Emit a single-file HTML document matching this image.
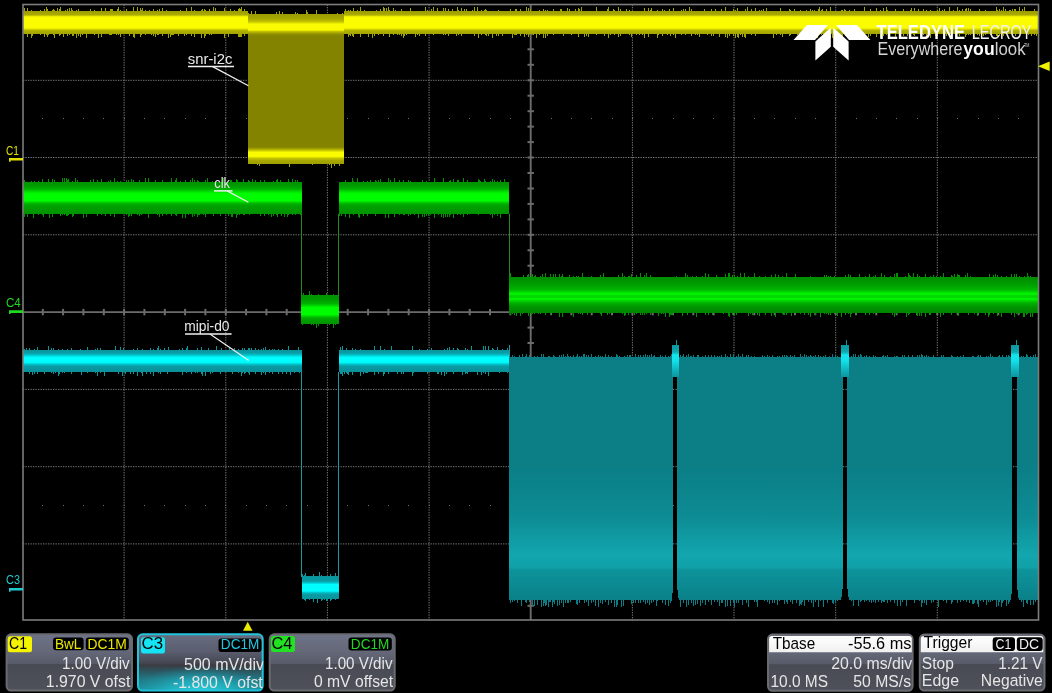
<!DOCTYPE html>
<html><head><meta charset="utf-8"><style>
*{margin:0;padding:0}
html,body{width:1052px;height:693px;background:#000;overflow:hidden;font-family:"Liberation Sans",sans-serif}
</style></head><body>
<svg width="1052" height="693" viewBox="0 0 1052 693" style="position:absolute;left:0;top:0;display:block;will-change:transform"><defs><linearGradient id="teal" x1="0" y1="356.8" x2="0" y2="599.5" gradientUnits="userSpaceOnUse"><stop offset="0" stop-color="#0b7e86"/><stop offset="0.45" stop-color="#0b7e86"/><stop offset="0.66" stop-color="#0d8c94"/><stop offset="0.815" stop-color="#12a6ae"/><stop offset="0.87" stop-color="#10a0a8"/><stop offset="0.875" stop-color="#0e949c"/><stop offset="1" stop-color="#0a8088"/></linearGradient><linearGradient id="pg" x1="0" y1="0" x2="0" y2="1"><stop offset="0" stop-color="#70748a"/><stop offset="0.08" stop-color="#6c7084"/><stop offset="0.3" stop-color="#646878"/><stop offset="0.52" stop-color="#585b69"/><stop offset="0.535" stop-color="#484a54"/><stop offset="1" stop-color="#4e505a"/></linearGradient><linearGradient id="pg3" x1="0" y1="0" x2="0" y2="1"><stop offset="0" stop-color="#686c80"/><stop offset="0.3" stop-color="#5a5e70"/><stop offset="0.5" stop-color="#464854"/><stop offset="0.55" stop-color="#3c3b42"/><stop offset="0.65" stop-color="#2c545e"/><stop offset="0.8" stop-color="#227884"/><stop offset="1" stop-color="#1e96a4"/></linearGradient><radialGradient id="glow" gradientUnits="userSpaceOnUse" cx="200" cy="694" r="70" gradientTransform="translate(200 694) scale(1 0.4) translate(-200 -694)"><stop offset="0" stop-color="#2ad8e8" stop-opacity="1"/><stop offset="0.5" stop-color="#22b8c8" stop-opacity="0.7"/><stop offset="1" stop-color="#1a98a8" stop-opacity="0"/></radialGradient><linearGradient id="hd" x1="0" y1="0" x2="0" y2="1"><stop offset="0" stop-color="#ffffff"/><stop offset="1" stop-color="#f0f0f0"/></linearGradient><linearGradient id="g0" gradientUnits="userSpaceOnUse" x1="0" y1="11.3" x2="0" y2="34.4"><stop offset="0.0000" stop-color="#9c9c00"/><stop offset="0.1602" stop-color="#acac00"/><stop offset="0.2165" stop-color="#e8e800"/><stop offset="0.2684" stop-color="#fcfc00"/><stop offset="0.7143" stop-color="#fcfc00"/><stop offset="0.7792" stop-color="#d8d800"/><stop offset="0.8312" stop-color="#b4b400"/><stop offset="1.0000" stop-color="#a0a000"/></linearGradient><linearGradient id="g1" gradientUnits="userSpaceOnUse" x1="0" y1="13.5" x2="0" y2="164.4"><stop offset="0.0000" stop-color="#9a9a00"/><stop offset="0.0364" stop-color="#a8a800"/><stop offset="0.0563" stop-color="#c8c800"/><stop offset="0.0696" stop-color="#fafa00"/><stop offset="0.1093" stop-color="#fafa00"/><stop offset="0.1193" stop-color="#c0c000"/><stop offset="0.1359" stop-color="#909000"/><stop offset="0.1491" stop-color="#838300"/><stop offset="0.8847" stop-color="#838300"/><stop offset="0.8979" stop-color="#a4a400"/><stop offset="0.9112" stop-color="#d8d800"/><stop offset="0.9211" stop-color="#fafa00"/><stop offset="0.9476" stop-color="#fafa00"/><stop offset="0.9576" stop-color="#c8c800"/><stop offset="0.9742" stop-color="#a8a800"/><stop offset="1.0000" stop-color="#9c9c00"/></linearGradient><linearGradient id="g2" gradientUnits="userSpaceOnUse" x1="0" y1="182.3" x2="0" y2="214.3"><stop offset="0.0000" stop-color="#009400"/><stop offset="0.1156" stop-color="#009c00"/><stop offset="0.2094" stop-color="#00b000"/><stop offset="0.2719" stop-color="#00d400"/><stop offset="0.3438" stop-color="#00f800"/><stop offset="0.3656" stop-color="#00fc00"/><stop offset="0.5781" stop-color="#00fc00"/><stop offset="0.6156" stop-color="#00d800"/><stop offset="0.6719" stop-color="#00b000"/><stop offset="0.7406" stop-color="#00a000"/><stop offset="1.0000" stop-color="#009200"/></linearGradient><linearGradient id="g3" gradientUnits="userSpaceOnUse" x1="0" y1="295.2" x2="0" y2="324.4"><stop offset="0.0000" stop-color="#009400"/><stop offset="0.1644" stop-color="#009c00"/><stop offset="0.2842" stop-color="#00b000"/><stop offset="0.3527" stop-color="#00d400"/><stop offset="0.4212" stop-color="#00fc00"/><stop offset="0.6610" stop-color="#00fc00"/><stop offset="0.7123" stop-color="#00d800"/><stop offset="0.7740" stop-color="#00b000"/><stop offset="0.8493" stop-color="#00a000"/><stop offset="1.0000" stop-color="#009200"/></linearGradient><linearGradient id="g4" gradientUnits="userSpaceOnUse" x1="0" y1="277.2" x2="0" y2="312.8"><stop offset="0.0000" stop-color="#008c00"/><stop offset="0.1910" stop-color="#009c00"/><stop offset="0.3455" stop-color="#00b400"/><stop offset="0.4242" stop-color="#00dc00"/><stop offset="0.4663" stop-color="#00fc00"/><stop offset="0.5084" stop-color="#00dc00"/><stop offset="0.5646" stop-color="#00d400"/><stop offset="0.6096" stop-color="#00fc00"/><stop offset="0.6517" stop-color="#00dc00"/><stop offset="0.7247" stop-color="#00b000"/><stop offset="0.8371" stop-color="#009400"/><stop offset="1.0000" stop-color="#008400"/></linearGradient><linearGradient id="g5" gradientUnits="userSpaceOnUse" x1="0" y1="349.5" x2="0" y2="372.2"><stop offset="0.0000" stop-color="#0a929a"/><stop offset="0.1542" stop-color="#0a9ea6"/><stop offset="0.2555" stop-color="#00cad2"/><stop offset="0.3436" stop-color="#00fcfc"/><stop offset="0.5639" stop-color="#00fcfc"/><stop offset="0.6520" stop-color="#00c4cc"/><stop offset="0.7401" stop-color="#0a9aa2"/><stop offset="0.8590" stop-color="#0a96a0"/><stop offset="1.0000" stop-color="#0a8e96"/></linearGradient><linearGradient id="g6" gradientUnits="userSpaceOnUse" x1="0" y1="576.4" x2="0" y2="598.8"><stop offset="0.0000" stop-color="#0a949c"/><stop offset="0.2054" stop-color="#0a9ca4"/><stop offset="0.2946" stop-color="#00c8d0"/><stop offset="0.3527" stop-color="#00fcfc"/><stop offset="0.6518" stop-color="#00fcfc"/><stop offset="0.7188" stop-color="#00c4cc"/><stop offset="0.7991" stop-color="#0a9ca4"/><stop offset="1.0000" stop-color="#0a949c"/></linearGradient><linearGradient id="g7" gradientUnits="userSpaceOnUse" x1="0" y1="344.7" x2="0" y2="377"><stop offset="0.0000" stop-color="#0c96a0"/><stop offset="0.2260" stop-color="#0ea8b0"/><stop offset="0.3189" stop-color="#12e6ee"/><stop offset="0.5046" stop-color="#12e0e8"/><stop offset="0.7523" stop-color="#10b8c0"/><stop offset="1.0000" stop-color="#0c96a0"/></linearGradient><linearGradient id="g8" gradientUnits="userSpaceOnUse" x1="0" y1="344.7" x2="0" y2="377"><stop offset="0.0000" stop-color="#0c96a0"/><stop offset="0.2260" stop-color="#0ea8b0"/><stop offset="0.3189" stop-color="#12e6ee"/><stop offset="0.5046" stop-color="#12e0e8"/><stop offset="0.7523" stop-color="#10b8c0"/><stop offset="1.0000" stop-color="#0c96a0"/></linearGradient><linearGradient id="g9" gradientUnits="userSpaceOnUse" x1="0" y1="344.7" x2="0" y2="377"><stop offset="0.0000" stop-color="#0c96a0"/><stop offset="0.2260" stop-color="#0ea8b0"/><stop offset="0.3189" stop-color="#12e6ee"/><stop offset="0.5046" stop-color="#12e0e8"/><stop offset="0.7523" stop-color="#10b8c0"/><stop offset="1.0000" stop-color="#0c96a0"/></linearGradient></defs><rect width="1052" height="693" fill="#000"/><g shape-rendering="crispEdges"><line x1="124.1" y1="4.5" x2="124.1" y2="620.0" stroke="#7c7c7c" stroke-width="1" stroke-dasharray="1.3 1.2" shape-rendering="auto"/><line x1="225.8" y1="4.5" x2="225.8" y2="620.0" stroke="#7c7c7c" stroke-width="1" stroke-dasharray="1.3 1.2" shape-rendering="auto"/><line x1="327.4" y1="4.5" x2="327.4" y2="620.0" stroke="#7c7c7c" stroke-width="1" stroke-dasharray="1.3 1.2" shape-rendering="auto"/><line x1="429.1" y1="4.5" x2="429.1" y2="620.0" stroke="#7c7c7c" stroke-width="1" stroke-dasharray="1.3 1.2" shape-rendering="auto"/><line x1="632.4" y1="4.5" x2="632.4" y2="620.0" stroke="#7c7c7c" stroke-width="1" stroke-dasharray="1.3 1.2" shape-rendering="auto"/><line x1="734.0" y1="4.5" x2="734.0" y2="620.0" stroke="#7c7c7c" stroke-width="1" stroke-dasharray="1.3 1.2" shape-rendering="auto"/><line x1="835.7" y1="4.5" x2="835.7" y2="620.0" stroke="#7c7c7c" stroke-width="1" stroke-dasharray="1.3 1.2" shape-rendering="auto"/><line x1="937.3" y1="4.5" x2="937.3" y2="620.0" stroke="#7c7c7c" stroke-width="1" stroke-dasharray="1.3 1.2" shape-rendering="auto"/><line x1="23.0" y1="80.3" x2="1038.5" y2="80.3" stroke="#7c7c7c" stroke-width="1" stroke-dasharray="1.3 1.2" shape-rendering="auto"/><line x1="23.0" y1="157.5" x2="1038.5" y2="157.5" stroke="#7c7c7c" stroke-width="1" stroke-dasharray="1.3 1.2" shape-rendering="auto"/><line x1="23.0" y1="234.8" x2="1038.5" y2="234.8" stroke="#7c7c7c" stroke-width="1" stroke-dasharray="1.3 1.2" shape-rendering="auto"/><line x1="23.0" y1="389.4" x2="1038.5" y2="389.4" stroke="#7c7c7c" stroke-width="1" stroke-dasharray="1.3 1.2" shape-rendering="auto"/><line x1="23.0" y1="466.7" x2="1038.5" y2="466.7" stroke="#7c7c7c" stroke-width="1" stroke-dasharray="1.3 1.2" shape-rendering="auto"/><line x1="23.0" y1="543.9" x2="1038.5" y2="543.9" stroke="#7c7c7c" stroke-width="1" stroke-dasharray="1.3 1.2" shape-rendering="auto"/><rect x="42.3" y="118.4" width="1" height="1" fill="#6c6c6c"/><rect x="62.6" y="118.4" width="1" height="1" fill="#6c6c6c"/><rect x="82.9" y="118.4" width="1" height="1" fill="#6c6c6c"/><rect x="103.3" y="118.4" width="1" height="1" fill="#6c6c6c"/><rect x="123.6" y="118.4" width="1" height="1" fill="#6c6c6c"/><rect x="143.9" y="118.4" width="1" height="1" fill="#6c6c6c"/><rect x="164.3" y="118.4" width="1" height="1" fill="#6c6c6c"/><rect x="184.6" y="118.4" width="1" height="1" fill="#6c6c6c"/><rect x="204.9" y="118.4" width="1" height="1" fill="#6c6c6c"/><rect x="225.3" y="118.4" width="1" height="1" fill="#6c6c6c"/><rect x="245.6" y="118.4" width="1" height="1" fill="#6c6c6c"/><rect x="265.9" y="118.4" width="1" height="1" fill="#6c6c6c"/><rect x="286.2" y="118.4" width="1" height="1" fill="#6c6c6c"/><rect x="306.6" y="118.4" width="1" height="1" fill="#6c6c6c"/><rect x="326.9" y="118.4" width="1" height="1" fill="#6c6c6c"/><rect x="347.2" y="118.4" width="1" height="1" fill="#6c6c6c"/><rect x="367.6" y="118.4" width="1" height="1" fill="#6c6c6c"/><rect x="387.9" y="118.4" width="1" height="1" fill="#6c6c6c"/><rect x="408.2" y="118.4" width="1" height="1" fill="#6c6c6c"/><rect x="428.6" y="118.4" width="1" height="1" fill="#6c6c6c"/><rect x="448.9" y="118.4" width="1" height="1" fill="#6c6c6c"/><rect x="469.2" y="118.4" width="1" height="1" fill="#6c6c6c"/><rect x="489.5" y="118.4" width="1" height="1" fill="#6c6c6c"/><rect x="509.9" y="118.4" width="1" height="1" fill="#6c6c6c"/><rect x="530.2" y="118.4" width="1" height="1" fill="#6c6c6c"/><rect x="550.5" y="118.4" width="1" height="1" fill="#6c6c6c"/><rect x="570.9" y="118.4" width="1" height="1" fill="#6c6c6c"/><rect x="591.2" y="118.4" width="1" height="1" fill="#6c6c6c"/><rect x="611.5" y="118.4" width="1" height="1" fill="#6c6c6c"/><rect x="631.9" y="118.4" width="1" height="1" fill="#6c6c6c"/><rect x="652.2" y="118.4" width="1" height="1" fill="#6c6c6c"/><rect x="672.5" y="118.4" width="1" height="1" fill="#6c6c6c"/><rect x="692.8" y="118.4" width="1" height="1" fill="#6c6c6c"/><rect x="713.2" y="118.4" width="1" height="1" fill="#6c6c6c"/><rect x="733.5" y="118.4" width="1" height="1" fill="#6c6c6c"/><rect x="753.8" y="118.4" width="1" height="1" fill="#6c6c6c"/><rect x="774.2" y="118.4" width="1" height="1" fill="#6c6c6c"/><rect x="794.5" y="118.4" width="1" height="1" fill="#6c6c6c"/><rect x="814.8" y="118.4" width="1" height="1" fill="#6c6c6c"/><rect x="835.2" y="118.4" width="1" height="1" fill="#6c6c6c"/><rect x="855.5" y="118.4" width="1" height="1" fill="#6c6c6c"/><rect x="875.8" y="118.4" width="1" height="1" fill="#6c6c6c"/><rect x="896.1" y="118.4" width="1" height="1" fill="#6c6c6c"/><rect x="916.5" y="118.4" width="1" height="1" fill="#6c6c6c"/><rect x="936.8" y="118.4" width="1" height="1" fill="#6c6c6c"/><rect x="957.1" y="118.4" width="1" height="1" fill="#6c6c6c"/><rect x="977.5" y="118.4" width="1" height="1" fill="#6c6c6c"/><rect x="997.8" y="118.4" width="1" height="1" fill="#6c6c6c"/><rect x="1018.1" y="118.4" width="1" height="1" fill="#6c6c6c"/><rect x="42.3" y="504.8" width="1" height="1" fill="#6c6c6c"/><rect x="62.6" y="504.8" width="1" height="1" fill="#6c6c6c"/><rect x="82.9" y="504.8" width="1" height="1" fill="#6c6c6c"/><rect x="103.3" y="504.8" width="1" height="1" fill="#6c6c6c"/><rect x="123.6" y="504.8" width="1" height="1" fill="#6c6c6c"/><rect x="143.9" y="504.8" width="1" height="1" fill="#6c6c6c"/><rect x="164.3" y="504.8" width="1" height="1" fill="#6c6c6c"/><rect x="184.6" y="504.8" width="1" height="1" fill="#6c6c6c"/><rect x="204.9" y="504.8" width="1" height="1" fill="#6c6c6c"/><rect x="225.3" y="504.8" width="1" height="1" fill="#6c6c6c"/><rect x="245.6" y="504.8" width="1" height="1" fill="#6c6c6c"/><rect x="265.9" y="504.8" width="1" height="1" fill="#6c6c6c"/><rect x="286.2" y="504.8" width="1" height="1" fill="#6c6c6c"/><rect x="306.6" y="504.8" width="1" height="1" fill="#6c6c6c"/><rect x="326.9" y="504.8" width="1" height="1" fill="#6c6c6c"/><rect x="347.2" y="504.8" width="1" height="1" fill="#6c6c6c"/><rect x="367.6" y="504.8" width="1" height="1" fill="#6c6c6c"/><rect x="387.9" y="504.8" width="1" height="1" fill="#6c6c6c"/><rect x="408.2" y="504.8" width="1" height="1" fill="#6c6c6c"/><rect x="428.6" y="504.8" width="1" height="1" fill="#6c6c6c"/><rect x="448.9" y="504.8" width="1" height="1" fill="#6c6c6c"/><rect x="469.2" y="504.8" width="1" height="1" fill="#6c6c6c"/><rect x="489.5" y="504.8" width="1" height="1" fill="#6c6c6c"/><rect x="509.9" y="504.8" width="1" height="1" fill="#6c6c6c"/><rect x="530.2" y="504.8" width="1" height="1" fill="#6c6c6c"/><rect x="550.5" y="504.8" width="1" height="1" fill="#6c6c6c"/><rect x="570.9" y="504.8" width="1" height="1" fill="#6c6c6c"/><rect x="591.2" y="504.8" width="1" height="1" fill="#6c6c6c"/><rect x="611.5" y="504.8" width="1" height="1" fill="#6c6c6c"/><rect x="631.9" y="504.8" width="1" height="1" fill="#6c6c6c"/><rect x="652.2" y="504.8" width="1" height="1" fill="#6c6c6c"/><rect x="672.5" y="504.8" width="1" height="1" fill="#6c6c6c"/><rect x="692.8" y="504.8" width="1" height="1" fill="#6c6c6c"/><rect x="713.2" y="504.8" width="1" height="1" fill="#6c6c6c"/><rect x="733.5" y="504.8" width="1" height="1" fill="#6c6c6c"/><rect x="753.8" y="504.8" width="1" height="1" fill="#6c6c6c"/><rect x="774.2" y="504.8" width="1" height="1" fill="#6c6c6c"/><rect x="794.5" y="504.8" width="1" height="1" fill="#6c6c6c"/><rect x="814.8" y="504.8" width="1" height="1" fill="#6c6c6c"/><rect x="835.2" y="504.8" width="1" height="1" fill="#6c6c6c"/><rect x="855.5" y="504.8" width="1" height="1" fill="#6c6c6c"/><rect x="875.8" y="504.8" width="1" height="1" fill="#6c6c6c"/><rect x="896.1" y="504.8" width="1" height="1" fill="#6c6c6c"/><rect x="916.5" y="504.8" width="1" height="1" fill="#6c6c6c"/><rect x="936.8" y="504.8" width="1" height="1" fill="#6c6c6c"/><rect x="957.1" y="504.8" width="1" height="1" fill="#6c6c6c"/><rect x="977.5" y="504.8" width="1" height="1" fill="#6c6c6c"/><rect x="997.8" y="504.8" width="1" height="1" fill="#6c6c6c"/><rect x="1018.1" y="504.8" width="1" height="1" fill="#6c6c6c"/><line x1="23.0" y1="312.10" x2="1038.5" y2="312.10" stroke="#6c6c6c" stroke-width="1.9" shape-rendering="auto"/><line x1="530.70" y1="4.5" x2="530.70" y2="620.0" stroke="#6c6c6c" stroke-width="1.9" shape-rendering="auto"/><line x1="42.8" y1="308.9" x2="42.8" y2="315.3" stroke="#6c6c6c" stroke-width="2" shape-rendering="auto"/><line x1="63.1" y1="308.9" x2="63.1" y2="315.3" stroke="#6c6c6c" stroke-width="2" shape-rendering="auto"/><line x1="83.4" y1="308.9" x2="83.4" y2="315.3" stroke="#6c6c6c" stroke-width="2" shape-rendering="auto"/><line x1="103.8" y1="308.9" x2="103.8" y2="315.3" stroke="#6c6c6c" stroke-width="2" shape-rendering="auto"/><line x1="124.1" y1="308.9" x2="124.1" y2="315.3" stroke="#6c6c6c" stroke-width="2" shape-rendering="auto"/><line x1="144.4" y1="308.9" x2="144.4" y2="315.3" stroke="#6c6c6c" stroke-width="2" shape-rendering="auto"/><line x1="164.8" y1="308.9" x2="164.8" y2="315.3" stroke="#6c6c6c" stroke-width="2" shape-rendering="auto"/><line x1="185.1" y1="308.9" x2="185.1" y2="315.3" stroke="#6c6c6c" stroke-width="2" shape-rendering="auto"/><line x1="205.4" y1="308.9" x2="205.4" y2="315.3" stroke="#6c6c6c" stroke-width="2" shape-rendering="auto"/><line x1="225.8" y1="308.9" x2="225.8" y2="315.3" stroke="#6c6c6c" stroke-width="2" shape-rendering="auto"/><line x1="246.1" y1="308.9" x2="246.1" y2="315.3" stroke="#6c6c6c" stroke-width="2" shape-rendering="auto"/><line x1="266.4" y1="308.9" x2="266.4" y2="315.3" stroke="#6c6c6c" stroke-width="2" shape-rendering="auto"/><line x1="286.7" y1="308.9" x2="286.7" y2="315.3" stroke="#6c6c6c" stroke-width="2" shape-rendering="auto"/><line x1="307.1" y1="308.9" x2="307.1" y2="315.3" stroke="#6c6c6c" stroke-width="2" shape-rendering="auto"/><line x1="327.4" y1="308.9" x2="327.4" y2="315.3" stroke="#6c6c6c" stroke-width="2" shape-rendering="auto"/><line x1="347.7" y1="308.9" x2="347.7" y2="315.3" stroke="#6c6c6c" stroke-width="2" shape-rendering="auto"/><line x1="368.1" y1="308.9" x2="368.1" y2="315.3" stroke="#6c6c6c" stroke-width="2" shape-rendering="auto"/><line x1="388.4" y1="308.9" x2="388.4" y2="315.3" stroke="#6c6c6c" stroke-width="2" shape-rendering="auto"/><line x1="408.7" y1="308.9" x2="408.7" y2="315.3" stroke="#6c6c6c" stroke-width="2" shape-rendering="auto"/><line x1="429.1" y1="308.9" x2="429.1" y2="315.3" stroke="#6c6c6c" stroke-width="2" shape-rendering="auto"/><line x1="449.4" y1="308.9" x2="449.4" y2="315.3" stroke="#6c6c6c" stroke-width="2" shape-rendering="auto"/><line x1="469.7" y1="308.9" x2="469.7" y2="315.3" stroke="#6c6c6c" stroke-width="2" shape-rendering="auto"/><line x1="490.0" y1="308.9" x2="490.0" y2="315.3" stroke="#6c6c6c" stroke-width="2" shape-rendering="auto"/><line x1="510.4" y1="308.9" x2="510.4" y2="315.3" stroke="#6c6c6c" stroke-width="2" shape-rendering="auto"/><line x1="551.0" y1="308.9" x2="551.0" y2="315.3" stroke="#6c6c6c" stroke-width="2" shape-rendering="auto"/><line x1="571.4" y1="308.9" x2="571.4" y2="315.3" stroke="#6c6c6c" stroke-width="2" shape-rendering="auto"/><line x1="591.7" y1="308.9" x2="591.7" y2="315.3" stroke="#6c6c6c" stroke-width="2" shape-rendering="auto"/><line x1="612.0" y1="308.9" x2="612.0" y2="315.3" stroke="#6c6c6c" stroke-width="2" shape-rendering="auto"/><line x1="632.4" y1="308.9" x2="632.4" y2="315.3" stroke="#6c6c6c" stroke-width="2" shape-rendering="auto"/><line x1="652.7" y1="308.9" x2="652.7" y2="315.3" stroke="#6c6c6c" stroke-width="2" shape-rendering="auto"/><line x1="673.0" y1="308.9" x2="673.0" y2="315.3" stroke="#6c6c6c" stroke-width="2" shape-rendering="auto"/><line x1="693.3" y1="308.9" x2="693.3" y2="315.3" stroke="#6c6c6c" stroke-width="2" shape-rendering="auto"/><line x1="713.7" y1="308.9" x2="713.7" y2="315.3" stroke="#6c6c6c" stroke-width="2" shape-rendering="auto"/><line x1="734.0" y1="308.9" x2="734.0" y2="315.3" stroke="#6c6c6c" stroke-width="2" shape-rendering="auto"/><line x1="754.3" y1="308.9" x2="754.3" y2="315.3" stroke="#6c6c6c" stroke-width="2" shape-rendering="auto"/><line x1="774.7" y1="308.9" x2="774.7" y2="315.3" stroke="#6c6c6c" stroke-width="2" shape-rendering="auto"/><line x1="795.0" y1="308.9" x2="795.0" y2="315.3" stroke="#6c6c6c" stroke-width="2" shape-rendering="auto"/><line x1="815.3" y1="308.9" x2="815.3" y2="315.3" stroke="#6c6c6c" stroke-width="2" shape-rendering="auto"/><line x1="835.7" y1="308.9" x2="835.7" y2="315.3" stroke="#6c6c6c" stroke-width="2" shape-rendering="auto"/><line x1="856.0" y1="308.9" x2="856.0" y2="315.3" stroke="#6c6c6c" stroke-width="2" shape-rendering="auto"/><line x1="876.3" y1="308.9" x2="876.3" y2="315.3" stroke="#6c6c6c" stroke-width="2" shape-rendering="auto"/><line x1="896.6" y1="308.9" x2="896.6" y2="315.3" stroke="#6c6c6c" stroke-width="2" shape-rendering="auto"/><line x1="917.0" y1="308.9" x2="917.0" y2="315.3" stroke="#6c6c6c" stroke-width="2" shape-rendering="auto"/><line x1="937.3" y1="308.9" x2="937.3" y2="315.3" stroke="#6c6c6c" stroke-width="2" shape-rendering="auto"/><line x1="957.6" y1="308.9" x2="957.6" y2="315.3" stroke="#6c6c6c" stroke-width="2" shape-rendering="auto"/><line x1="978.0" y1="308.9" x2="978.0" y2="315.3" stroke="#6c6c6c" stroke-width="2" shape-rendering="auto"/><line x1="998.3" y1="308.9" x2="998.3" y2="315.3" stroke="#6c6c6c" stroke-width="2" shape-rendering="auto"/><line x1="1018.6" y1="308.9" x2="1018.6" y2="315.3" stroke="#6c6c6c" stroke-width="2" shape-rendering="auto"/><line x1="527.5" y1="18.4" x2="533.9" y2="18.4" stroke="#6c6c6c" stroke-width="2" shape-rendering="auto"/><line x1="527.5" y1="33.9" x2="533.9" y2="33.9" stroke="#6c6c6c" stroke-width="2" shape-rendering="auto"/><line x1="527.5" y1="49.3" x2="533.9" y2="49.3" stroke="#6c6c6c" stroke-width="2" shape-rendering="auto"/><line x1="527.5" y1="64.8" x2="533.9" y2="64.8" stroke="#6c6c6c" stroke-width="2" shape-rendering="auto"/><line x1="527.5" y1="80.3" x2="533.9" y2="80.3" stroke="#6c6c6c" stroke-width="2" shape-rendering="auto"/><line x1="527.5" y1="95.7" x2="533.9" y2="95.7" stroke="#6c6c6c" stroke-width="2" shape-rendering="auto"/><line x1="527.5" y1="111.2" x2="533.9" y2="111.2" stroke="#6c6c6c" stroke-width="2" shape-rendering="auto"/><line x1="527.5" y1="126.6" x2="533.9" y2="126.6" stroke="#6c6c6c" stroke-width="2" shape-rendering="auto"/><line x1="527.5" y1="142.1" x2="533.9" y2="142.1" stroke="#6c6c6c" stroke-width="2" shape-rendering="auto"/><line x1="527.5" y1="157.5" x2="533.9" y2="157.5" stroke="#6c6c6c" stroke-width="2" shape-rendering="auto"/><line x1="527.5" y1="173.0" x2="533.9" y2="173.0" stroke="#6c6c6c" stroke-width="2" shape-rendering="auto"/><line x1="527.5" y1="188.5" x2="533.9" y2="188.5" stroke="#6c6c6c" stroke-width="2" shape-rendering="auto"/><line x1="527.5" y1="203.9" x2="533.9" y2="203.9" stroke="#6c6c6c" stroke-width="2" shape-rendering="auto"/><line x1="527.5" y1="219.4" x2="533.9" y2="219.4" stroke="#6c6c6c" stroke-width="2" shape-rendering="auto"/><line x1="527.5" y1="234.8" x2="533.9" y2="234.8" stroke="#6c6c6c" stroke-width="2" shape-rendering="auto"/><line x1="527.5" y1="250.3" x2="533.9" y2="250.3" stroke="#6c6c6c" stroke-width="2" shape-rendering="auto"/><line x1="527.5" y1="265.7" x2="533.9" y2="265.7" stroke="#6c6c6c" stroke-width="2" shape-rendering="auto"/><line x1="527.5" y1="281.2" x2="533.9" y2="281.2" stroke="#6c6c6c" stroke-width="2" shape-rendering="auto"/><line x1="527.5" y1="296.6" x2="533.9" y2="296.6" stroke="#6c6c6c" stroke-width="2" shape-rendering="auto"/><line x1="527.5" y1="327.6" x2="533.9" y2="327.6" stroke="#6c6c6c" stroke-width="2" shape-rendering="auto"/><line x1="527.5" y1="343.0" x2="533.9" y2="343.0" stroke="#6c6c6c" stroke-width="2" shape-rendering="auto"/><line x1="527.5" y1="358.5" x2="533.9" y2="358.5" stroke="#6c6c6c" stroke-width="2" shape-rendering="auto"/><line x1="527.5" y1="373.9" x2="533.9" y2="373.9" stroke="#6c6c6c" stroke-width="2" shape-rendering="auto"/><line x1="527.5" y1="389.4" x2="533.9" y2="389.4" stroke="#6c6c6c" stroke-width="2" shape-rendering="auto"/><line x1="527.5" y1="404.8" x2="533.9" y2="404.8" stroke="#6c6c6c" stroke-width="2" shape-rendering="auto"/><line x1="527.5" y1="420.3" x2="533.9" y2="420.3" stroke="#6c6c6c" stroke-width="2" shape-rendering="auto"/><line x1="527.5" y1="435.7" x2="533.9" y2="435.7" stroke="#6c6c6c" stroke-width="2" shape-rendering="auto"/><line x1="527.5" y1="451.2" x2="533.9" y2="451.2" stroke="#6c6c6c" stroke-width="2" shape-rendering="auto"/><line x1="527.5" y1="466.7" x2="533.9" y2="466.7" stroke="#6c6c6c" stroke-width="2" shape-rendering="auto"/><line x1="527.5" y1="482.1" x2="533.9" y2="482.1" stroke="#6c6c6c" stroke-width="2" shape-rendering="auto"/><line x1="527.5" y1="497.6" x2="533.9" y2="497.6" stroke="#6c6c6c" stroke-width="2" shape-rendering="auto"/><line x1="527.5" y1="513.0" x2="533.9" y2="513.0" stroke="#6c6c6c" stroke-width="2" shape-rendering="auto"/><line x1="527.5" y1="528.5" x2="533.9" y2="528.5" stroke="#6c6c6c" stroke-width="2" shape-rendering="auto"/><line x1="527.5" y1="543.9" x2="533.9" y2="543.9" stroke="#6c6c6c" stroke-width="2" shape-rendering="auto"/><line x1="527.5" y1="559.4" x2="533.9" y2="559.4" stroke="#6c6c6c" stroke-width="2" shape-rendering="auto"/><line x1="527.5" y1="574.9" x2="533.9" y2="574.9" stroke="#6c6c6c" stroke-width="2" shape-rendering="auto"/><line x1="527.5" y1="590.3" x2="533.9" y2="590.3" stroke="#6c6c6c" stroke-width="2" shape-rendering="auto"/><line x1="527.5" y1="605.8" x2="533.9" y2="605.8" stroke="#6c6c6c" stroke-width="2" shape-rendering="auto"/><rect x="23.0" y="11.3" width="224.5" height="23.1" fill="url(#g0)"/><rect x="344.4" y="11.3" width="694.1" height="23.1" fill="url(#g0)"/><rect x="24" y="8.3" width="1" height="3" fill="#a4a400"/><rect x="27" y="8.3" width="1" height="3" fill="#a4a400"/><rect x="27" y="34.4" width="1" height="3" fill="#a4a400"/><rect x="31" y="10.3" width="1" height="1" fill="#a4a400"/><rect x="31" y="34.4" width="1" height="4" fill="#a4a400"/><rect x="32" y="34.4" width="1" height="2" fill="#a4a400"/><rect x="40" y="10.3" width="1" height="1" fill="#a4a400"/><rect x="40" y="34.4" width="1" height="1" fill="#a4a400"/><rect x="44" y="9.3" width="1" height="2" fill="#a4a400"/><rect x="44" y="34.4" width="1" height="3" fill="#a4a400"/><rect x="46" y="7.3" width="1" height="4" fill="#a4a400"/><rect x="46" y="34.4" width="1" height="1" fill="#a4a400"/><rect x="47" y="9.3" width="1" height="2" fill="#a4a400"/><rect x="47" y="34.4" width="1" height="3" fill="#a4a400"/><rect x="48" y="34.4" width="1" height="1" fill="#a4a400"/><rect x="52" y="10.3" width="1" height="1" fill="#a4a400"/><rect x="53" y="9.3" width="1" height="2" fill="#a4a400"/><rect x="53" y="34.4" width="1" height="1" fill="#a4a400"/><rect x="54" y="10.3" width="1" height="1" fill="#a4a400"/><rect x="54" y="34.4" width="1" height="4" fill="#a4a400"/><rect x="57" y="8.3" width="1" height="3" fill="#a4a400"/><rect x="59" y="9.3" width="1" height="2" fill="#a4a400"/><rect x="59" y="34.4" width="1" height="2" fill="#a4a400"/><rect x="60" y="7.3" width="1" height="4" fill="#a4a400"/><rect x="60" y="34.4" width="1" height="1" fill="#a4a400"/><rect x="63" y="34.4" width="1" height="3" fill="#a4a400"/><rect x="65" y="10.3" width="1" height="1" fill="#a4a400"/><rect x="67" y="9.3" width="1" height="2" fill="#a4a400"/><rect x="67" y="34.4" width="1" height="2" fill="#a4a400"/><rect x="69" y="8.3" width="1" height="3" fill="#a4a400"/><rect x="69" y="34.4" width="1" height="1" fill="#a4a400"/><rect x="71" y="8.3" width="1" height="3" fill="#a4a400"/><rect x="72" y="10.3" width="1" height="1" fill="#a4a400"/><rect x="72" y="34.4" width="1" height="2" fill="#a4a400"/><rect x="73" y="34.4" width="1" height="2" fill="#a4a400"/><rect x="76" y="10.3" width="1" height="1" fill="#a4a400"/><rect x="76" y="34.4" width="1" height="4" fill="#a4a400"/><rect x="78" y="9.3" width="1" height="2" fill="#a4a400"/><rect x="78" y="34.4" width="1" height="2" fill="#a4a400"/><rect x="80" y="34.4" width="1" height="3" fill="#a4a400"/><rect x="82" y="34.4" width="1" height="1" fill="#a4a400"/><rect x="86" y="34.4" width="1" height="4" fill="#a4a400"/><rect x="90" y="9.3" width="1" height="2" fill="#a4a400"/><rect x="94" y="10.3" width="1" height="1" fill="#a4a400"/><rect x="94" y="34.4" width="1" height="1" fill="#a4a400"/><rect x="98" y="34.4" width="1" height="4" fill="#a4a400"/><rect x="101" y="8.3" width="1" height="3" fill="#a4a400"/><rect x="101" y="34.4" width="1" height="3" fill="#a4a400"/><rect x="105" y="8.3" width="1" height="3" fill="#a4a400"/><rect x="109" y="34.4" width="1" height="1" fill="#a4a400"/><rect x="110" y="9.3" width="1" height="2" fill="#a4a400"/><rect x="110" y="34.4" width="1" height="1" fill="#a4a400"/><rect x="111" y="9.3" width="1" height="2" fill="#a4a400"/><rect x="111" y="34.4" width="1" height="1" fill="#a4a400"/><rect x="112" y="9.3" width="1" height="2" fill="#a4a400"/><rect x="116" y="34.4" width="1" height="1" fill="#a4a400"/><rect x="117" y="9.3" width="1" height="2" fill="#a4a400"/><rect x="118" y="7.3" width="1" height="4" fill="#a4a400"/><rect x="118" y="34.4" width="1" height="1" fill="#a4a400"/><rect x="120" y="10.3" width="1" height="1" fill="#a4a400"/><rect x="120" y="34.4" width="1" height="3" fill="#a4a400"/><rect x="126" y="9.3" width="1" height="2" fill="#a4a400"/><rect x="129" y="34.4" width="1" height="2" fill="#a4a400"/><rect x="133" y="7.3" width="1" height="4" fill="#a4a400"/><rect x="133" y="34.4" width="1" height="3" fill="#a4a400"/><rect x="134" y="34.4" width="1" height="4" fill="#a4a400"/><rect x="137" y="7.3" width="1" height="4" fill="#a4a400"/><rect x="140" y="8.3" width="1" height="3" fill="#a4a400"/><rect x="140" y="34.4" width="1" height="3" fill="#a4a400"/><rect x="141" y="10.3" width="1" height="1" fill="#a4a400"/><rect x="141" y="34.4" width="1" height="1" fill="#a4a400"/><rect x="142" y="8.3" width="1" height="3" fill="#a4a400"/><rect x="145" y="10.3" width="1" height="1" fill="#a4a400"/><rect x="145" y="34.4" width="1" height="1" fill="#a4a400"/><rect x="149" y="10.3" width="1" height="1" fill="#a4a400"/><rect x="151" y="34.4" width="1" height="1" fill="#a4a400"/><rect x="153" y="9.3" width="1" height="2" fill="#a4a400"/><rect x="153" y="34.4" width="1" height="2" fill="#a4a400"/><rect x="155" y="34.4" width="1" height="3" fill="#a4a400"/><rect x="157" y="10.3" width="1" height="1" fill="#a4a400"/><rect x="157" y="34.4" width="1" height="1" fill="#a4a400"/><rect x="158" y="34.4" width="1" height="1" fill="#a4a400"/><rect x="159" y="9.3" width="1" height="2" fill="#a4a400"/><rect x="162" y="8.3" width="1" height="3" fill="#a4a400"/><rect x="162" y="34.4" width="1" height="2" fill="#a4a400"/><rect x="166" y="10.3" width="1" height="1" fill="#a4a400"/><rect x="168" y="34.4" width="1" height="4" fill="#a4a400"/><rect x="170" y="34.4" width="1" height="3" fill="#a4a400"/><rect x="171" y="34.4" width="1" height="1" fill="#a4a400"/><rect x="172" y="34.4" width="1" height="1" fill="#a4a400"/><rect x="173" y="34.4" width="1" height="1" fill="#a4a400"/><rect x="178" y="34.4" width="1" height="2" fill="#a4a400"/><rect x="180" y="10.3" width="1" height="1" fill="#a4a400"/><rect x="184" y="34.4" width="1" height="2" fill="#a4a400"/><rect x="186" y="8.3" width="1" height="3" fill="#a4a400"/><rect x="186" y="34.4" width="1" height="1" fill="#a4a400"/><rect x="191" y="7.3" width="1" height="4" fill="#a4a400"/><rect x="191" y="34.4" width="1" height="2" fill="#a4a400"/><rect x="194" y="10.3" width="1" height="1" fill="#a4a400"/><rect x="194" y="34.4" width="1" height="3" fill="#a4a400"/><rect x="201" y="10.3" width="1" height="1" fill="#a4a400"/><rect x="201" y="34.4" width="1" height="4" fill="#a4a400"/><rect x="202" y="9.3" width="1" height="2" fill="#a4a400"/><rect x="204" y="9.3" width="1" height="2" fill="#a4a400"/><rect x="204" y="34.4" width="1" height="4" fill="#a4a400"/><rect x="205" y="10.3" width="1" height="1" fill="#a4a400"/><rect x="205" y="34.4" width="1" height="2" fill="#a4a400"/><rect x="209" y="9.3" width="1" height="2" fill="#a4a400"/><rect x="209" y="34.4" width="1" height="1" fill="#a4a400"/><rect x="211" y="34.4" width="1" height="1" fill="#a4a400"/><rect x="213" y="7.3" width="1" height="4" fill="#a4a400"/><rect x="215" y="8.3" width="1" height="3" fill="#a4a400"/><rect x="224" y="8.3" width="1" height="3" fill="#a4a400"/><rect x="224" y="34.4" width="1" height="4" fill="#a4a400"/><rect x="228" y="34.4" width="1" height="3" fill="#a4a400"/><rect x="230" y="9.3" width="1" height="2" fill="#a4a400"/><rect x="234" y="10.3" width="1" height="1" fill="#a4a400"/><rect x="238" y="9.3" width="1" height="2" fill="#a4a400"/><rect x="238" y="34.4" width="1" height="3" fill="#a4a400"/><rect x="239" y="8.3" width="1" height="3" fill="#a4a400"/><rect x="239" y="34.4" width="1" height="3" fill="#a4a400"/><rect x="240" y="9.3" width="1" height="2" fill="#a4a400"/><rect x="240" y="34.4" width="1" height="3" fill="#a4a400"/><rect x="241" y="7.3" width="1" height="4" fill="#a4a400"/><rect x="241" y="34.4" width="1" height="3" fill="#a4a400"/><rect x="244" y="9.3" width="1" height="2" fill="#a4a400"/><rect x="244" y="34.4" width="1" height="2" fill="#a4a400"/><rect x="345" y="9.3" width="1" height="2" fill="#a4a400"/><rect x="348" y="10.3" width="1" height="1" fill="#a4a400"/><rect x="348" y="34.4" width="1" height="3" fill="#a4a400"/><rect x="349" y="34.4" width="1" height="1" fill="#a4a400"/><rect x="350" y="10.3" width="1" height="1" fill="#a4a400"/><rect x="350" y="34.4" width="1" height="2" fill="#a4a400"/><rect x="352" y="34.4" width="1" height="2" fill="#a4a400"/><rect x="353" y="8.3" width="1" height="3" fill="#a4a400"/><rect x="353" y="34.4" width="1" height="3" fill="#a4a400"/><rect x="357" y="10.3" width="1" height="1" fill="#a4a400"/><rect x="360" y="7.3" width="1" height="4" fill="#a4a400"/><rect x="360" y="34.4" width="1" height="3" fill="#a4a400"/><rect x="364" y="10.3" width="1" height="1" fill="#a4a400"/><rect x="368" y="34.4" width="1" height="3" fill="#a4a400"/><rect x="372" y="34.4" width="1" height="4" fill="#a4a400"/><rect x="374" y="34.4" width="1" height="2" fill="#a4a400"/><rect x="376" y="10.3" width="1" height="1" fill="#a4a400"/><rect x="378" y="34.4" width="1" height="1" fill="#a4a400"/><rect x="380" y="9.3" width="1" height="2" fill="#a4a400"/><rect x="383" y="7.3" width="1" height="4" fill="#a4a400"/><rect x="383" y="34.4" width="1" height="2" fill="#a4a400"/><rect x="384" y="8.3" width="1" height="3" fill="#a4a400"/><rect x="386" y="8.3" width="1" height="3" fill="#a4a400"/><rect x="388" y="7.3" width="1" height="4" fill="#a4a400"/><rect x="389" y="10.3" width="1" height="1" fill="#a4a400"/><rect x="389" y="34.4" width="1" height="3" fill="#a4a400"/><rect x="393" y="8.3" width="1" height="3" fill="#a4a400"/><rect x="393" y="34.4" width="1" height="1" fill="#a4a400"/><rect x="395" y="10.3" width="1" height="1" fill="#a4a400"/><rect x="397" y="34.4" width="1" height="1" fill="#a4a400"/><rect x="399" y="34.4" width="1" height="1" fill="#a4a400"/><rect x="401" y="9.3" width="1" height="2" fill="#a4a400"/><rect x="401" y="34.4" width="1" height="2" fill="#a4a400"/><rect x="403" y="34.4" width="1" height="4" fill="#a4a400"/><rect x="404" y="34.4" width="1" height="2" fill="#a4a400"/><rect x="406" y="34.4" width="1" height="1" fill="#a4a400"/><rect x="410" y="8.3" width="1" height="3" fill="#a4a400"/><rect x="415" y="34.4" width="1" height="3" fill="#a4a400"/><rect x="417" y="34.4" width="1" height="1" fill="#a4a400"/><rect x="419" y="34.4" width="1" height="2" fill="#a4a400"/><rect x="425" y="7.3" width="1" height="4" fill="#a4a400"/><rect x="425" y="34.4" width="1" height="2" fill="#a4a400"/><rect x="427" y="10.3" width="1" height="1" fill="#a4a400"/><rect x="431" y="9.3" width="1" height="2" fill="#a4a400"/><rect x="433" y="7.3" width="1" height="4" fill="#a4a400"/><rect x="433" y="34.4" width="1" height="1" fill="#a4a400"/><rect x="437" y="8.3" width="1" height="3" fill="#a4a400"/><rect x="443" y="8.3" width="1" height="3" fill="#a4a400"/><rect x="443" y="34.4" width="1" height="1" fill="#a4a400"/><rect x="445" y="8.3" width="1" height="3" fill="#a4a400"/><rect x="445" y="34.4" width="1" height="1" fill="#a4a400"/><rect x="448" y="9.3" width="1" height="2" fill="#a4a400"/><rect x="448" y="34.4" width="1" height="2" fill="#a4a400"/><rect x="452" y="9.3" width="1" height="2" fill="#a4a400"/><rect x="456" y="34.4" width="1" height="2" fill="#a4a400"/><rect x="457" y="7.3" width="1" height="4" fill="#a4a400"/><rect x="458" y="10.3" width="1" height="1" fill="#a4a400"/><rect x="458" y="34.4" width="1" height="1" fill="#a4a400"/><rect x="461" y="8.3" width="1" height="3" fill="#a4a400"/><rect x="461" y="34.4" width="1" height="2" fill="#a4a400"/><rect x="464" y="9.3" width="1" height="2" fill="#a4a400"/><rect x="466" y="9.3" width="1" height="2" fill="#a4a400"/><rect x="472" y="10.3" width="1" height="1" fill="#a4a400"/><rect x="474" y="7.3" width="1" height="4" fill="#a4a400"/><rect x="474" y="34.4" width="1" height="2" fill="#a4a400"/><rect x="477" y="7.3" width="1" height="4" fill="#a4a400"/><rect x="478" y="34.4" width="1" height="4" fill="#a4a400"/><rect x="481" y="10.3" width="1" height="1" fill="#a4a400"/><rect x="481" y="34.4" width="1" height="1" fill="#a4a400"/><rect x="484" y="10.3" width="1" height="1" fill="#a4a400"/><rect x="485" y="9.3" width="1" height="2" fill="#a4a400"/><rect x="485" y="34.4" width="1" height="1" fill="#a4a400"/><rect x="486" y="10.3" width="1" height="1" fill="#a4a400"/><rect x="486" y="34.4" width="1" height="2" fill="#a4a400"/><rect x="488" y="34.4" width="1" height="2" fill="#a4a400"/><rect x="492" y="34.4" width="1" height="4" fill="#a4a400"/><rect x="496" y="34.4" width="1" height="2" fill="#a4a400"/><rect x="498" y="10.3" width="1" height="1" fill="#a4a400"/><rect x="498" y="34.4" width="1" height="2" fill="#a4a400"/><rect x="502" y="34.4" width="1" height="2" fill="#a4a400"/><rect x="510" y="9.3" width="1" height="2" fill="#a4a400"/><rect x="512" y="34.4" width="1" height="4" fill="#a4a400"/><rect x="514" y="34.4" width="1" height="1" fill="#a4a400"/><rect x="515" y="9.3" width="1" height="2" fill="#a4a400"/><rect x="515" y="34.4" width="1" height="1" fill="#a4a400"/><rect x="516" y="9.3" width="1" height="2" fill="#a4a400"/><rect x="516" y="34.4" width="1" height="1" fill="#a4a400"/><rect x="520" y="9.3" width="1" height="2" fill="#a4a400"/><rect x="520" y="34.4" width="1" height="2" fill="#a4a400"/><rect x="524" y="34.4" width="1" height="3" fill="#a4a400"/><rect x="526" y="7.3" width="1" height="4" fill="#a4a400"/><rect x="526" y="34.4" width="1" height="1" fill="#a4a400"/><rect x="528" y="8.3" width="1" height="3" fill="#a4a400"/><rect x="528" y="34.4" width="1" height="3" fill="#a4a400"/><rect x="530" y="9.3" width="1" height="2" fill="#a4a400"/><rect x="533" y="34.4" width="1" height="1" fill="#a4a400"/><rect x="536" y="34.4" width="1" height="4" fill="#a4a400"/><rect x="539" y="10.3" width="1" height="1" fill="#a4a400"/><rect x="539" y="34.4" width="1" height="1" fill="#a4a400"/><rect x="543" y="9.3" width="1" height="2" fill="#a4a400"/><rect x="543" y="34.4" width="1" height="4" fill="#a4a400"/><rect x="545" y="10.3" width="1" height="1" fill="#a4a400"/><rect x="545" y="34.4" width="1" height="4" fill="#a4a400"/><rect x="547" y="10.3" width="1" height="1" fill="#a4a400"/><rect x="547" y="34.4" width="1" height="2" fill="#a4a400"/><rect x="553" y="9.3" width="1" height="2" fill="#a4a400"/><rect x="553" y="34.4" width="1" height="1" fill="#a4a400"/><rect x="560" y="9.3" width="1" height="2" fill="#a4a400"/><rect x="561" y="9.3" width="1" height="2" fill="#a4a400"/><rect x="563" y="34.4" width="1" height="2" fill="#a4a400"/><rect x="567" y="8.3" width="1" height="3" fill="#a4a400"/><rect x="569" y="9.3" width="1" height="2" fill="#a4a400"/><rect x="571" y="34.4" width="1" height="1" fill="#a4a400"/><rect x="575" y="9.3" width="1" height="2" fill="#a4a400"/><rect x="578" y="8.3" width="1" height="3" fill="#a4a400"/><rect x="578" y="34.4" width="1" height="3" fill="#a4a400"/><rect x="579" y="9.3" width="1" height="2" fill="#a4a400"/><rect x="581" y="7.3" width="1" height="4" fill="#a4a400"/><rect x="584" y="34.4" width="1" height="3" fill="#a4a400"/><rect x="586" y="34.4" width="1" height="2" fill="#a4a400"/><rect x="588" y="34.4" width="1" height="3" fill="#a4a400"/><rect x="596" y="7.3" width="1" height="4" fill="#a4a400"/><rect x="596" y="34.4" width="1" height="1" fill="#a4a400"/><rect x="604" y="34.4" width="1" height="2" fill="#a4a400"/><rect x="607" y="9.3" width="1" height="2" fill="#a4a400"/><rect x="608" y="7.3" width="1" height="4" fill="#a4a400"/><rect x="608" y="34.4" width="1" height="4" fill="#a4a400"/><rect x="610" y="34.4" width="1" height="1" fill="#a4a400"/><rect x="613" y="9.3" width="1" height="2" fill="#a4a400"/><rect x="614" y="10.3" width="1" height="1" fill="#a4a400"/><rect x="614" y="34.4" width="1" height="1" fill="#a4a400"/><rect x="618" y="7.3" width="1" height="4" fill="#a4a400"/><rect x="618" y="34.4" width="1" height="3" fill="#a4a400"/><rect x="620" y="9.3" width="1" height="2" fill="#a4a400"/><rect x="620" y="34.4" width="1" height="2" fill="#a4a400"/><rect x="626" y="9.3" width="1" height="2" fill="#a4a400"/><rect x="629" y="10.3" width="1" height="1" fill="#a4a400"/><rect x="629" y="34.4" width="1" height="1" fill="#a4a400"/><rect x="631" y="34.4" width="1" height="3" fill="#a4a400"/><rect x="636" y="34.4" width="1" height="1" fill="#a4a400"/><rect x="639" y="34.4" width="1" height="1" fill="#a4a400"/><rect x="642" y="34.4" width="1" height="1" fill="#a4a400"/><rect x="644" y="8.3" width="1" height="3" fill="#a4a400"/><rect x="644" y="34.4" width="1" height="4" fill="#a4a400"/><rect x="648" y="8.3" width="1" height="3" fill="#a4a400"/><rect x="648" y="34.4" width="1" height="3" fill="#a4a400"/><rect x="650" y="10.3" width="1" height="1" fill="#a4a400"/><rect x="651" y="8.3" width="1" height="3" fill="#a4a400"/><rect x="657" y="10.3" width="1" height="1" fill="#a4a400"/><rect x="657" y="34.4" width="1" height="4" fill="#a4a400"/><rect x="658" y="34.4" width="1" height="1" fill="#a4a400"/><rect x="662" y="9.3" width="1" height="2" fill="#a4a400"/><rect x="662" y="34.4" width="1" height="2" fill="#a4a400"/><rect x="664" y="10.3" width="1" height="1" fill="#a4a400"/><rect x="667" y="34.4" width="1" height="1" fill="#a4a400"/><rect x="669" y="9.3" width="1" height="2" fill="#a4a400"/><rect x="670" y="34.4" width="1" height="2" fill="#a4a400"/><rect x="673" y="8.3" width="1" height="3" fill="#a4a400"/><rect x="673" y="34.4" width="1" height="1" fill="#a4a400"/><rect x="675" y="34.4" width="1" height="4" fill="#a4a400"/><rect x="681" y="10.3" width="1" height="1" fill="#a4a400"/><rect x="681" y="34.4" width="1" height="1" fill="#a4a400"/><rect x="683" y="9.3" width="1" height="2" fill="#a4a400"/><rect x="685" y="9.3" width="1" height="2" fill="#a4a400"/><rect x="685" y="34.4" width="1" height="1" fill="#a4a400"/><rect x="689" y="7.3" width="1" height="4" fill="#a4a400"/><rect x="691" y="9.3" width="1" height="2" fill="#a4a400"/><rect x="691" y="34.4" width="1" height="2" fill="#a4a400"/><rect x="695" y="34.4" width="1" height="1" fill="#a4a400"/><rect x="697" y="34.4" width="1" height="1" fill="#a4a400"/><rect x="699" y="34.4" width="1" height="3" fill="#a4a400"/><rect x="704" y="9.3" width="1" height="2" fill="#a4a400"/><rect x="707" y="34.4" width="1" height="1" fill="#a4a400"/><rect x="711" y="9.3" width="1" height="2" fill="#a4a400"/><rect x="711" y="34.4" width="1" height="2" fill="#a4a400"/><rect x="713" y="34.4" width="1" height="2" fill="#a4a400"/><rect x="715" y="9.3" width="1" height="2" fill="#a4a400"/><rect x="719" y="34.4" width="1" height="3" fill="#a4a400"/><rect x="721" y="9.3" width="1" height="2" fill="#a4a400"/><rect x="725" y="7.3" width="1" height="4" fill="#a4a400"/><rect x="725" y="34.4" width="1" height="3" fill="#a4a400"/><rect x="727" y="34.4" width="1" height="4" fill="#a4a400"/><rect x="729" y="34.4" width="1" height="2" fill="#a4a400"/><rect x="733" y="9.3" width="1" height="2" fill="#a4a400"/><rect x="733" y="34.4" width="1" height="2" fill="#a4a400"/><rect x="735" y="10.3" width="1" height="1" fill="#a4a400"/><rect x="735" y="34.4" width="1" height="4" fill="#a4a400"/><rect x="737" y="8.3" width="1" height="3" fill="#a4a400"/><rect x="737" y="34.4" width="1" height="3" fill="#a4a400"/><rect x="738" y="34.4" width="1" height="4" fill="#a4a400"/><rect x="740" y="34.4" width="1" height="1" fill="#a4a400"/><rect x="742" y="34.4" width="1" height="3" fill="#a4a400"/><rect x="744" y="34.4" width="1" height="3" fill="#a4a400"/><rect x="745" y="9.3" width="1" height="2" fill="#a4a400"/><rect x="745" y="34.4" width="1" height="4" fill="#a4a400"/><rect x="747" y="7.3" width="1" height="4" fill="#a4a400"/><rect x="751" y="9.3" width="1" height="2" fill="#a4a400"/><rect x="751" y="34.4" width="1" height="1" fill="#a4a400"/><rect x="755" y="8.3" width="1" height="3" fill="#a4a400"/><rect x="755" y="34.4" width="1" height="2" fill="#a4a400"/><rect x="759" y="10.3" width="1" height="1" fill="#a4a400"/><rect x="761" y="10.3" width="1" height="1" fill="#a4a400"/><rect x="763" y="9.3" width="1" height="2" fill="#a4a400"/><rect x="766" y="8.3" width="1" height="3" fill="#a4a400"/><rect x="773" y="34.4" width="1" height="4" fill="#a4a400"/><rect x="776" y="34.4" width="1" height="1" fill="#a4a400"/><rect x="780" y="8.3" width="1" height="3" fill="#a4a400"/><rect x="780" y="34.4" width="1" height="1" fill="#a4a400"/><rect x="782" y="34.4" width="1" height="3" fill="#a4a400"/><rect x="789" y="9.3" width="1" height="2" fill="#a4a400"/><rect x="789" y="34.4" width="1" height="2" fill="#a4a400"/><rect x="790" y="10.3" width="1" height="1" fill="#a4a400"/><rect x="790" y="34.4" width="1" height="1" fill="#a4a400"/><rect x="794" y="9.3" width="1" height="2" fill="#a4a400"/><rect x="797" y="34.4" width="1" height="1" fill="#a4a400"/><rect x="799" y="34.4" width="1" height="1" fill="#a4a400"/><rect x="800" y="10.3" width="1" height="1" fill="#a4a400"/><rect x="800" y="34.4" width="1" height="3" fill="#a4a400"/><rect x="804" y="34.4" width="1" height="1" fill="#a4a400"/><rect x="806" y="10.3" width="1" height="1" fill="#a4a400"/><rect x="806" y="34.4" width="1" height="2" fill="#a4a400"/><rect x="810" y="9.3" width="1" height="2" fill="#a4a400"/><rect x="812" y="10.3" width="1" height="1" fill="#a4a400"/><rect x="812" y="34.4" width="1" height="2" fill="#a4a400"/><rect x="814" y="10.3" width="1" height="1" fill="#a4a400"/><rect x="817" y="34.4" width="1" height="4" fill="#a4a400"/><rect x="818" y="9.3" width="1" height="2" fill="#a4a400"/><rect x="819" y="7.3" width="1" height="4" fill="#a4a400"/><rect x="821" y="10.3" width="1" height="1" fill="#a4a400"/><rect x="821" y="34.4" width="1" height="1" fill="#a4a400"/><rect x="822" y="9.3" width="1" height="2" fill="#a4a400"/><rect x="826" y="9.3" width="1" height="2" fill="#a4a400"/><rect x="826" y="34.4" width="1" height="1" fill="#a4a400"/><rect x="828" y="34.4" width="1" height="4" fill="#a4a400"/><rect x="830" y="7.3" width="1" height="4" fill="#a4a400"/><rect x="830" y="34.4" width="1" height="4" fill="#a4a400"/><rect x="832" y="34.4" width="1" height="4" fill="#a4a400"/><rect x="840" y="34.4" width="1" height="4" fill="#a4a400"/><rect x="841" y="10.3" width="1" height="1" fill="#a4a400"/><rect x="841" y="34.4" width="1" height="3" fill="#a4a400"/><rect x="842" y="10.3" width="1" height="1" fill="#a4a400"/><rect x="842" y="34.4" width="1" height="3" fill="#a4a400"/><rect x="844" y="9.3" width="1" height="2" fill="#a4a400"/><rect x="845" y="10.3" width="1" height="1" fill="#a4a400"/><rect x="845" y="34.4" width="1" height="2" fill="#a4a400"/><rect x="849" y="10.3" width="1" height="1" fill="#a4a400"/><rect x="854" y="9.3" width="1" height="2" fill="#a4a400"/><rect x="854" y="34.4" width="1" height="1" fill="#a4a400"/><rect x="864" y="7.3" width="1" height="4" fill="#a4a400"/><rect x="868" y="34.4" width="1" height="3" fill="#a4a400"/><rect x="870" y="9.3" width="1" height="2" fill="#a4a400"/><rect x="870" y="34.4" width="1" height="2" fill="#a4a400"/><rect x="876" y="8.3" width="1" height="3" fill="#a4a400"/><rect x="876" y="34.4" width="1" height="3" fill="#a4a400"/><rect x="880" y="10.3" width="1" height="1" fill="#a4a400"/><rect x="880" y="34.4" width="1" height="4" fill="#a4a400"/><rect x="883" y="8.3" width="1" height="3" fill="#a4a400"/><rect x="883" y="34.4" width="1" height="2" fill="#a4a400"/><rect x="886" y="7.3" width="1" height="4" fill="#a4a400"/><rect x="886" y="34.4" width="1" height="1" fill="#a4a400"/><rect x="887" y="10.3" width="1" height="1" fill="#a4a400"/><rect x="895" y="9.3" width="1" height="2" fill="#a4a400"/><rect x="895" y="34.4" width="1" height="4" fill="#a4a400"/><rect x="899" y="34.4" width="1" height="4" fill="#a4a400"/><rect x="903" y="9.3" width="1" height="2" fill="#a4a400"/><rect x="903" y="34.4" width="1" height="2" fill="#a4a400"/><rect x="907" y="34.4" width="1" height="2" fill="#a4a400"/><rect x="910" y="10.3" width="1" height="1" fill="#a4a400"/><rect x="911" y="8.3" width="1" height="3" fill="#a4a400"/><rect x="913" y="34.4" width="1" height="1" fill="#a4a400"/><rect x="914" y="8.3" width="1" height="3" fill="#a4a400"/><rect x="914" y="34.4" width="1" height="2" fill="#a4a400"/><rect x="918" y="9.3" width="1" height="2" fill="#a4a400"/><rect x="923" y="9.3" width="1" height="2" fill="#a4a400"/><rect x="923" y="34.4" width="1" height="1" fill="#a4a400"/><rect x="926" y="10.3" width="1" height="1" fill="#a4a400"/><rect x="926" y="34.4" width="1" height="2" fill="#a4a400"/><rect x="930" y="10.3" width="1" height="1" fill="#a4a400"/><rect x="930" y="34.4" width="1" height="4" fill="#a4a400"/><rect x="935" y="34.4" width="1" height="2" fill="#a4a400"/><rect x="937" y="10.3" width="1" height="1" fill="#a4a400"/><rect x="937" y="34.4" width="1" height="2" fill="#a4a400"/><rect x="939" y="8.3" width="1" height="3" fill="#a4a400"/><rect x="942" y="10.3" width="1" height="1" fill="#a4a400"/><rect x="944" y="9.3" width="1" height="2" fill="#a4a400"/><rect x="946" y="34.4" width="1" height="2" fill="#a4a400"/><rect x="949" y="7.3" width="1" height="4" fill="#a4a400"/><rect x="949" y="34.4" width="1" height="2" fill="#a4a400"/><rect x="953" y="10.3" width="1" height="1" fill="#a4a400"/><rect x="957" y="7.3" width="1" height="4" fill="#a4a400"/><rect x="959" y="10.3" width="1" height="1" fill="#a4a400"/><rect x="959" y="34.4" width="1" height="2" fill="#a4a400"/><rect x="962" y="9.3" width="1" height="2" fill="#a4a400"/><rect x="965" y="9.3" width="1" height="2" fill="#a4a400"/><rect x="965" y="34.4" width="1" height="3" fill="#a4a400"/><rect x="966" y="8.3" width="1" height="3" fill="#a4a400"/><rect x="966" y="34.4" width="1" height="1" fill="#a4a400"/><rect x="968" y="8.3" width="1" height="3" fill="#a4a400"/><rect x="968" y="34.4" width="1" height="1" fill="#a4a400"/><rect x="970" y="9.3" width="1" height="2" fill="#a4a400"/><rect x="970" y="34.4" width="1" height="1" fill="#a4a400"/><rect x="974" y="34.4" width="1" height="4" fill="#a4a400"/><rect x="977" y="34.4" width="1" height="1" fill="#a4a400"/><rect x="979" y="9.3" width="1" height="2" fill="#a4a400"/><rect x="979" y="34.4" width="1" height="2" fill="#a4a400"/><rect x="983" y="34.4" width="1" height="2" fill="#a4a400"/><rect x="985" y="10.3" width="1" height="1" fill="#a4a400"/><rect x="985" y="34.4" width="1" height="1" fill="#a4a400"/><rect x="990" y="34.4" width="1" height="1" fill="#a4a400"/><rect x="996" y="7.3" width="1" height="4" fill="#a4a400"/><rect x="996" y="34.4" width="1" height="2" fill="#a4a400"/><rect x="997" y="10.3" width="1" height="1" fill="#a4a400"/><rect x="997" y="34.4" width="1" height="2" fill="#a4a400"/><rect x="999" y="9.3" width="1" height="2" fill="#a4a400"/><rect x="999" y="34.4" width="1" height="2" fill="#a4a400"/><rect x="1001" y="10.3" width="1" height="1" fill="#a4a400"/><rect x="1001" y="34.4" width="1" height="4" fill="#a4a400"/><rect x="1003" y="7.3" width="1" height="4" fill="#a4a400"/><rect x="1003" y="34.4" width="1" height="2" fill="#a4a400"/><rect x="1005" y="9.3" width="1" height="2" fill="#a4a400"/><rect x="1009" y="10.3" width="1" height="1" fill="#a4a400"/><rect x="1010" y="10.3" width="1" height="1" fill="#a4a400"/><rect x="1012" y="9.3" width="1" height="2" fill="#a4a400"/><rect x="1014" y="9.3" width="1" height="2" fill="#a4a400"/><rect x="1015" y="9.3" width="1" height="2" fill="#a4a400"/><rect x="1015" y="34.4" width="1" height="2" fill="#a4a400"/><rect x="1019" y="7.3" width="1" height="4" fill="#a4a400"/><rect x="1022" y="9.3" width="1" height="2" fill="#a4a400"/><rect x="1024" y="7.3" width="1" height="4" fill="#a4a400"/><rect x="1028" y="34.4" width="1" height="1" fill="#a4a400"/><rect x="1031" y="34.4" width="1" height="2" fill="#a4a400"/><rect x="1034" y="9.3" width="1" height="2" fill="#a4a400"/><rect x="1034" y="34.4" width="1" height="1" fill="#a4a400"/><rect x="1036" y="34.4" width="1" height="2" fill="#a4a400"/><rect x="247.5" y="13.5" width="96.9" height="150.9" fill="url(#g1)"/><rect x="248" y="12.5" width="1" height="1" fill="#a4a400"/><rect x="251" y="10.5" width="1" height="3" fill="#a4a400"/><rect x="255" y="10.5" width="1" height="3" fill="#a4a400"/><rect x="257" y="164.4" width="1" height="1" fill="#a4a400"/><rect x="259" y="164.4" width="1" height="2" fill="#a4a400"/><rect x="276" y="11.5" width="1" height="2" fill="#a4a400"/><rect x="279" y="10.5" width="1" height="3" fill="#a4a400"/><rect x="282" y="11.5" width="1" height="2" fill="#a4a400"/><rect x="289" y="164.4" width="1" height="3" fill="#a4a400"/><rect x="295" y="11.5" width="1" height="2" fill="#a4a400"/><rect x="297" y="12.5" width="1" height="1" fill="#a4a400"/><rect x="306" y="9.5" width="1" height="4" fill="#a4a400"/><rect x="307" y="11.5" width="1" height="2" fill="#a4a400"/><rect x="312" y="164.4" width="1" height="1" fill="#a4a400"/><rect x="316" y="9.5" width="1" height="4" fill="#a4a400"/><rect x="329" y="164.4" width="1" height="1" fill="#a4a400"/><rect x="331" y="164.4" width="1" height="4" fill="#a4a400"/><rect x="334" y="164.4" width="1" height="2" fill="#a4a400"/><rect x="337" y="12.5" width="1" height="1" fill="#a4a400"/><rect x="339" y="164.4" width="1" height="2" fill="#a4a400"/><rect x="342" y="12.5" width="1" height="1" fill="#a4a400"/><rect x="23.0" y="182.3" width="279.0" height="32.0" fill="url(#g2)"/><rect x="338.5" y="182.3" width="170.7" height="32.0" fill="url(#g2)"/><rect x="24" y="180.3" width="1" height="2" fill="#009000"/><rect x="24" y="214.3" width="1" height="3" fill="#009000"/><rect x="27" y="214.3" width="1" height="3" fill="#009000"/><rect x="31" y="181.3" width="1" height="1" fill="#009000"/><rect x="33" y="214.3" width="1" height="4" fill="#009000"/><rect x="34" y="181.3" width="1" height="1" fill="#009000"/><rect x="38" y="181.3" width="1" height="1" fill="#009000"/><rect x="38" y="214.3" width="1" height="1" fill="#009000"/><rect x="42" y="179.3" width="1" height="3" fill="#009000"/><rect x="42" y="214.3" width="1" height="1" fill="#009000"/><rect x="43" y="214.3" width="1" height="3" fill="#009000"/><rect x="48" y="179.3" width="1" height="3" fill="#009000"/><rect x="49" y="214.3" width="1" height="4" fill="#009000"/><rect x="52" y="179.3" width="1" height="3" fill="#009000"/><rect x="52" y="214.3" width="1" height="3" fill="#009000"/><rect x="54" y="180.3" width="1" height="2" fill="#009000"/><rect x="60" y="214.3" width="1" height="2" fill="#009000"/><rect x="62" y="178.3" width="1" height="4" fill="#009000"/><rect x="62" y="214.3" width="1" height="1" fill="#009000"/><rect x="64" y="178.3" width="1" height="4" fill="#009000"/><rect x="64" y="214.3" width="1" height="1" fill="#009000"/><rect x="66" y="178.3" width="1" height="4" fill="#009000"/><rect x="66" y="214.3" width="1" height="2" fill="#009000"/><rect x="67" y="180.3" width="1" height="2" fill="#009000"/><rect x="67" y="214.3" width="1" height="2" fill="#009000"/><rect x="68" y="179.3" width="1" height="3" fill="#009000"/><rect x="68" y="214.3" width="1" height="1" fill="#009000"/><rect x="72" y="181.3" width="1" height="1" fill="#009000"/><rect x="72" y="214.3" width="1" height="3" fill="#009000"/><rect x="73" y="214.3" width="1" height="2" fill="#009000"/><rect x="75" y="178.3" width="1" height="4" fill="#009000"/><rect x="77" y="180.3" width="1" height="2" fill="#009000"/><rect x="83" y="214.3" width="1" height="4" fill="#009000"/><rect x="86" y="214.3" width="1" height="3" fill="#009000"/><rect x="90" y="180.3" width="1" height="2" fill="#009000"/><rect x="93" y="179.3" width="1" height="3" fill="#009000"/><rect x="97" y="180.3" width="1" height="2" fill="#009000"/><rect x="97" y="214.3" width="1" height="2" fill="#009000"/><rect x="101" y="179.3" width="1" height="3" fill="#009000"/><rect x="101" y="214.3" width="1" height="1" fill="#009000"/><rect x="105" y="214.3" width="1" height="2" fill="#009000"/><rect x="108" y="181.3" width="1" height="1" fill="#009000"/><rect x="110" y="180.3" width="1" height="2" fill="#009000"/><rect x="110" y="214.3" width="1" height="2" fill="#009000"/><rect x="114" y="178.3" width="1" height="4" fill="#009000"/><rect x="114" y="214.3" width="1" height="3" fill="#009000"/><rect x="117" y="181.3" width="1" height="1" fill="#009000"/><rect x="120" y="181.3" width="1" height="1" fill="#009000"/><rect x="126" y="180.3" width="1" height="2" fill="#009000"/><rect x="126" y="214.3" width="1" height="1" fill="#009000"/><rect x="128" y="180.3" width="1" height="2" fill="#009000"/><rect x="128" y="214.3" width="1" height="3" fill="#009000"/><rect x="129" y="214.3" width="1" height="2" fill="#009000"/><rect x="131" y="179.3" width="1" height="3" fill="#009000"/><rect x="131" y="214.3" width="1" height="2" fill="#009000"/><rect x="133" y="180.3" width="1" height="2" fill="#009000"/><rect x="137" y="214.3" width="1" height="1" fill="#009000"/><rect x="139" y="180.3" width="1" height="2" fill="#009000"/><rect x="139" y="214.3" width="1" height="2" fill="#009000"/><rect x="141" y="214.3" width="1" height="1" fill="#009000"/><rect x="145" y="178.3" width="1" height="4" fill="#009000"/><rect x="148" y="178.3" width="1" height="4" fill="#009000"/><rect x="148" y="214.3" width="1" height="4" fill="#009000"/><rect x="155" y="180.3" width="1" height="2" fill="#009000"/><rect x="157" y="214.3" width="1" height="1" fill="#009000"/><rect x="159" y="214.3" width="1" height="3" fill="#009000"/><rect x="162" y="180.3" width="1" height="2" fill="#009000"/><rect x="162" y="214.3" width="1" height="2" fill="#009000"/><rect x="166" y="214.3" width="1" height="1" fill="#009000"/><rect x="171" y="178.3" width="1" height="4" fill="#009000"/><rect x="171" y="214.3" width="1" height="2" fill="#009000"/><rect x="175" y="180.3" width="1" height="2" fill="#009000"/><rect x="175" y="214.3" width="1" height="1" fill="#009000"/><rect x="176" y="178.3" width="1" height="4" fill="#009000"/><rect x="176" y="214.3" width="1" height="2" fill="#009000"/><rect x="180" y="181.3" width="1" height="1" fill="#009000"/><rect x="182" y="214.3" width="1" height="4" fill="#009000"/><rect x="185" y="180.3" width="1" height="2" fill="#009000"/><rect x="185" y="214.3" width="1" height="4" fill="#009000"/><rect x="188" y="214.3" width="1" height="1" fill="#009000"/><rect x="190" y="180.3" width="1" height="2" fill="#009000"/><rect x="192" y="178.3" width="1" height="4" fill="#009000"/><rect x="192" y="214.3" width="1" height="3" fill="#009000"/><rect x="194" y="180.3" width="1" height="2" fill="#009000"/><rect x="194" y="214.3" width="1" height="2" fill="#009000"/><rect x="197" y="180.3" width="1" height="2" fill="#009000"/><rect x="197" y="214.3" width="1" height="3" fill="#009000"/><rect x="198" y="181.3" width="1" height="1" fill="#009000"/><rect x="198" y="214.3" width="1" height="1" fill="#009000"/><rect x="199" y="214.3" width="1" height="1" fill="#009000"/><rect x="203" y="214.3" width="1" height="1" fill="#009000"/><rect x="205" y="180.3" width="1" height="2" fill="#009000"/><rect x="205" y="214.3" width="1" height="3" fill="#009000"/><rect x="207" y="178.3" width="1" height="4" fill="#009000"/><rect x="212" y="181.3" width="1" height="1" fill="#009000"/><rect x="213" y="214.3" width="1" height="2" fill="#009000"/><rect x="220" y="214.3" width="1" height="2" fill="#009000"/><rect x="222" y="181.3" width="1" height="1" fill="#009000"/><rect x="223" y="178.3" width="1" height="4" fill="#009000"/><rect x="228" y="214.3" width="1" height="2" fill="#009000"/><rect x="230" y="180.3" width="1" height="2" fill="#009000"/><rect x="231" y="180.3" width="1" height="2" fill="#009000"/><rect x="231" y="214.3" width="1" height="3" fill="#009000"/><rect x="232" y="214.3" width="1" height="3" fill="#009000"/><rect x="236" y="179.3" width="1" height="3" fill="#009000"/><rect x="236" y="214.3" width="1" height="4" fill="#009000"/><rect x="237" y="180.3" width="1" height="2" fill="#009000"/><rect x="237" y="214.3" width="1" height="1" fill="#009000"/><rect x="239" y="214.3" width="1" height="1" fill="#009000"/><rect x="243" y="179.3" width="1" height="3" fill="#009000"/><rect x="243" y="214.3" width="1" height="1" fill="#009000"/><rect x="244" y="214.3" width="1" height="1" fill="#009000"/><rect x="248" y="180.3" width="1" height="2" fill="#009000"/><rect x="249" y="181.3" width="1" height="1" fill="#009000"/><rect x="249" y="214.3" width="1" height="1" fill="#009000"/><rect x="252" y="179.3" width="1" height="3" fill="#009000"/><rect x="255" y="180.3" width="1" height="2" fill="#009000"/><rect x="260" y="180.3" width="1" height="2" fill="#009000"/><rect x="260" y="214.3" width="1" height="2" fill="#009000"/><rect x="264" y="180.3" width="1" height="2" fill="#009000"/><rect x="264" y="214.3" width="1" height="2" fill="#009000"/><rect x="268" y="214.3" width="1" height="1" fill="#009000"/><rect x="271" y="214.3" width="1" height="3" fill="#009000"/><rect x="273" y="181.3" width="1" height="1" fill="#009000"/><rect x="273" y="214.3" width="1" height="2" fill="#009000"/><rect x="276" y="180.3" width="1" height="2" fill="#009000"/><rect x="276" y="214.3" width="1" height="1" fill="#009000"/><rect x="277" y="179.3" width="1" height="3" fill="#009000"/><rect x="277" y="214.3" width="1" height="3" fill="#009000"/><rect x="280" y="180.3" width="1" height="2" fill="#009000"/><rect x="281" y="214.3" width="1" height="2" fill="#009000"/><rect x="284" y="214.3" width="1" height="3" fill="#009000"/><rect x="287" y="214.3" width="1" height="3" fill="#009000"/><rect x="288" y="179.3" width="1" height="3" fill="#009000"/><rect x="288" y="214.3" width="1" height="1" fill="#009000"/><rect x="292" y="179.3" width="1" height="3" fill="#009000"/><rect x="292" y="214.3" width="1" height="1" fill="#009000"/><rect x="295" y="180.3" width="1" height="2" fill="#009000"/><rect x="295" y="214.3" width="1" height="1" fill="#009000"/><rect x="297" y="180.3" width="1" height="2" fill="#009000"/><rect x="300" y="214.3" width="1" height="1" fill="#009000"/><rect x="339" y="214.3" width="1" height="2" fill="#009000"/><rect x="341" y="214.3" width="1" height="2" fill="#009000"/><rect x="345" y="180.3" width="1" height="2" fill="#009000"/><rect x="345" y="214.3" width="1" height="3" fill="#009000"/><rect x="349" y="214.3" width="1" height="4" fill="#009000"/><rect x="352" y="178.3" width="1" height="4" fill="#009000"/><rect x="353" y="181.3" width="1" height="1" fill="#009000"/><rect x="353" y="214.3" width="1" height="1" fill="#009000"/><rect x="357" y="178.3" width="1" height="4" fill="#009000"/><rect x="358" y="214.3" width="1" height="3" fill="#009000"/><rect x="359" y="214.3" width="1" height="4" fill="#009000"/><rect x="363" y="181.3" width="1" height="1" fill="#009000"/><rect x="363" y="214.3" width="1" height="2" fill="#009000"/><rect x="367" y="181.3" width="1" height="1" fill="#009000"/><rect x="367" y="214.3" width="1" height="2" fill="#009000"/><rect x="370" y="180.3" width="1" height="2" fill="#009000"/><rect x="375" y="180.3" width="1" height="2" fill="#009000"/><rect x="375" y="214.3" width="1" height="2" fill="#009000"/><rect x="376" y="181.3" width="1" height="1" fill="#009000"/><rect x="378" y="180.3" width="1" height="2" fill="#009000"/><rect x="380" y="179.3" width="1" height="3" fill="#009000"/><rect x="385" y="214.3" width="1" height="4" fill="#009000"/><rect x="388" y="178.3" width="1" height="4" fill="#009000"/><rect x="388" y="214.3" width="1" height="4" fill="#009000"/><rect x="390" y="180.3" width="1" height="2" fill="#009000"/><rect x="394" y="178.3" width="1" height="4" fill="#009000"/><rect x="394" y="214.3" width="1" height="3" fill="#009000"/><rect x="399" y="180.3" width="1" height="2" fill="#009000"/><rect x="399" y="214.3" width="1" height="1" fill="#009000"/><rect x="403" y="180.3" width="1" height="2" fill="#009000"/><rect x="403" y="214.3" width="1" height="1" fill="#009000"/><rect x="404" y="214.3" width="1" height="1" fill="#009000"/><rect x="408" y="180.3" width="1" height="2" fill="#009000"/><rect x="408" y="214.3" width="1" height="2" fill="#009000"/><rect x="410" y="181.3" width="1" height="1" fill="#009000"/><rect x="410" y="214.3" width="1" height="1" fill="#009000"/><rect x="414" y="214.3" width="1" height="1" fill="#009000"/><rect x="418" y="214.3" width="1" height="4" fill="#009000"/><rect x="422" y="180.3" width="1" height="2" fill="#009000"/><rect x="422" y="214.3" width="1" height="3" fill="#009000"/><rect x="424" y="214.3" width="1" height="3" fill="#009000"/><rect x="426" y="181.3" width="1" height="1" fill="#009000"/><rect x="426" y="214.3" width="1" height="2" fill="#009000"/><rect x="428" y="214.3" width="1" height="2" fill="#009000"/><rect x="430" y="214.3" width="1" height="1" fill="#009000"/><rect x="434" y="178.3" width="1" height="4" fill="#009000"/><rect x="434" y="214.3" width="1" height="4" fill="#009000"/><rect x="438" y="214.3" width="1" height="1" fill="#009000"/><rect x="441" y="214.3" width="1" height="3" fill="#009000"/><rect x="443" y="178.3" width="1" height="4" fill="#009000"/><rect x="443" y="214.3" width="1" height="4" fill="#009000"/><rect x="445" y="214.3" width="1" height="3" fill="#009000"/><rect x="447" y="214.3" width="1" height="3" fill="#009000"/><rect x="449" y="181.3" width="1" height="1" fill="#009000"/><rect x="449" y="214.3" width="1" height="3" fill="#009000"/><rect x="450" y="180.3" width="1" height="2" fill="#009000"/><rect x="450" y="214.3" width="1" height="1" fill="#009000"/><rect x="453" y="179.3" width="1" height="3" fill="#009000"/><rect x="453" y="214.3" width="1" height="4" fill="#009000"/><rect x="457" y="180.3" width="1" height="2" fill="#009000"/><rect x="457" y="214.3" width="1" height="1" fill="#009000"/><rect x="458" y="180.3" width="1" height="2" fill="#009000"/><rect x="460" y="214.3" width="1" height="1" fill="#009000"/><rect x="463" y="178.3" width="1" height="4" fill="#009000"/><rect x="463" y="214.3" width="1" height="3" fill="#009000"/><rect x="467" y="180.3" width="1" height="2" fill="#009000"/><rect x="467" y="214.3" width="1" height="1" fill="#009000"/><rect x="478" y="179.3" width="1" height="3" fill="#009000"/><rect x="478" y="214.3" width="1" height="1" fill="#009000"/><rect x="479" y="180.3" width="1" height="2" fill="#009000"/><rect x="480" y="181.3" width="1" height="1" fill="#009000"/><rect x="484" y="179.3" width="1" height="3" fill="#009000"/><rect x="485" y="181.3" width="1" height="1" fill="#009000"/><rect x="490" y="181.3" width="1" height="1" fill="#009000"/><rect x="490" y="214.3" width="1" height="1" fill="#009000"/><rect x="492" y="179.3" width="1" height="3" fill="#009000"/><rect x="492" y="214.3" width="1" height="4" fill="#009000"/><rect x="494" y="180.3" width="1" height="2" fill="#009000"/><rect x="494" y="214.3" width="1" height="1" fill="#009000"/><rect x="497" y="181.3" width="1" height="1" fill="#009000"/><rect x="497" y="214.3" width="1" height="2" fill="#009000"/><rect x="500" y="180.3" width="1" height="2" fill="#009000"/><rect x="500" y="214.3" width="1" height="4" fill="#009000"/><rect x="504" y="179.3" width="1" height="3" fill="#009000"/><rect x="301.4" y="295.2" width="37.7" height="29.2" fill="url(#g3)"/><rect x="302" y="324.4" width="1" height="1" fill="#009000"/><rect x="303" y="293.2" width="1" height="2" fill="#009000"/><rect x="309" y="291.2" width="1" height="4" fill="#009000"/><rect x="311" y="294.2" width="1" height="1" fill="#009000"/><rect x="311" y="324.4" width="1" height="1" fill="#009000"/><rect x="313" y="324.4" width="1" height="1" fill="#009000"/><rect x="316" y="324.4" width="1" height="4" fill="#009000"/><rect x="318" y="294.2" width="1" height="1" fill="#009000"/><rect x="318" y="324.4" width="1" height="2" fill="#009000"/><rect x="326" y="293.2" width="1" height="2" fill="#009000"/><rect x="329" y="324.4" width="1" height="1" fill="#009000"/><rect x="333" y="294.2" width="1" height="1" fill="#009000"/><rect x="333" y="324.4" width="1" height="4" fill="#009000"/><rect x="335" y="324.4" width="1" height="1" fill="#009000"/><rect x="301" y="214" width="1.2" height="82" fill="#228a22"/><rect x="338" y="214" width="1.2" height="82" fill="#228a22"/><rect x="508.6" y="214" width="1.2" height="63" fill="#228a22"/><rect x="509.2" y="277.2" width="529.3" height="35.6" fill="url(#g4)"/><rect x="510" y="273.2" width="1" height="4" fill="#009000"/><rect x="510" y="312.8" width="1" height="2" fill="#009000"/><rect x="512" y="312.8" width="1" height="1" fill="#009000"/><rect x="514" y="312.8" width="1" height="2" fill="#009000"/><rect x="516" y="312.8" width="1" height="3" fill="#009000"/><rect x="520" y="312.8" width="1" height="3" fill="#009000"/><rect x="522" y="312.8" width="1" height="1" fill="#009000"/><rect x="523" y="275.2" width="1" height="2" fill="#009000"/><rect x="527" y="275.2" width="1" height="2" fill="#009000"/><rect x="528" y="274.2" width="1" height="3" fill="#009000"/><rect x="528" y="312.8" width="1" height="3" fill="#009000"/><rect x="531" y="276.2" width="1" height="1" fill="#009000"/><rect x="531" y="312.8" width="1" height="2" fill="#009000"/><rect x="532" y="274.2" width="1" height="3" fill="#009000"/><rect x="532" y="312.8" width="1" height="1" fill="#009000"/><rect x="534" y="276.2" width="1" height="1" fill="#009000"/><rect x="534" y="312.8" width="1" height="1" fill="#009000"/><rect x="535" y="275.2" width="1" height="2" fill="#009000"/><rect x="538" y="312.8" width="1" height="1" fill="#009000"/><rect x="540" y="276.2" width="1" height="1" fill="#009000"/><rect x="540" y="312.8" width="1" height="1" fill="#009000"/><rect x="542" y="274.2" width="1" height="3" fill="#009000"/><rect x="545" y="273.2" width="1" height="4" fill="#009000"/><rect x="545" y="312.8" width="1" height="2" fill="#009000"/><rect x="550" y="274.2" width="1" height="3" fill="#009000"/><rect x="550" y="312.8" width="1" height="2" fill="#009000"/><rect x="553" y="274.2" width="1" height="3" fill="#009000"/><rect x="555" y="274.2" width="1" height="3" fill="#009000"/><rect x="559" y="274.2" width="1" height="3" fill="#009000"/><rect x="559" y="312.8" width="1" height="4" fill="#009000"/><rect x="561" y="276.2" width="1" height="1" fill="#009000"/><rect x="562" y="274.2" width="1" height="3" fill="#009000"/><rect x="562" y="312.8" width="1" height="4" fill="#009000"/><rect x="569" y="275.2" width="1" height="2" fill="#009000"/><rect x="573" y="276.2" width="1" height="1" fill="#009000"/><rect x="573" y="312.8" width="1" height="4" fill="#009000"/><rect x="576" y="276.2" width="1" height="1" fill="#009000"/><rect x="578" y="276.2" width="1" height="1" fill="#009000"/><rect x="578" y="312.8" width="1" height="1" fill="#009000"/><rect x="580" y="312.8" width="1" height="1" fill="#009000"/><rect x="582" y="273.2" width="1" height="4" fill="#009000"/><rect x="582" y="312.8" width="1" height="2" fill="#009000"/><rect x="587" y="312.8" width="1" height="2" fill="#009000"/><rect x="591" y="276.2" width="1" height="1" fill="#009000"/><rect x="600" y="275.2" width="1" height="2" fill="#009000"/><rect x="600" y="312.8" width="1" height="1" fill="#009000"/><rect x="601" y="312.8" width="1" height="3" fill="#009000"/><rect x="603" y="273.2" width="1" height="4" fill="#009000"/><rect x="607" y="312.8" width="1" height="2" fill="#009000"/><rect x="609" y="312.8" width="1" height="1" fill="#009000"/><rect x="618" y="275.2" width="1" height="2" fill="#009000"/><rect x="622" y="273.2" width="1" height="4" fill="#009000"/><rect x="622" y="312.8" width="1" height="1" fill="#009000"/><rect x="624" y="276.2" width="1" height="1" fill="#009000"/><rect x="624" y="312.8" width="1" height="3" fill="#009000"/><rect x="625" y="312.8" width="1" height="2" fill="#009000"/><rect x="628" y="276.2" width="1" height="1" fill="#009000"/><rect x="628" y="312.8" width="1" height="2" fill="#009000"/><rect x="629" y="276.2" width="1" height="1" fill="#009000"/><rect x="631" y="274.2" width="1" height="3" fill="#009000"/><rect x="634" y="312.8" width="1" height="2" fill="#009000"/><rect x="636" y="275.2" width="1" height="2" fill="#009000"/><rect x="636" y="312.8" width="1" height="1" fill="#009000"/><rect x="640" y="273.2" width="1" height="4" fill="#009000"/><rect x="640" y="312.8" width="1" height="2" fill="#009000"/><rect x="642" y="312.8" width="1" height="2" fill="#009000"/><rect x="644" y="275.2" width="1" height="2" fill="#009000"/><rect x="644" y="312.8" width="1" height="2" fill="#009000"/><rect x="646" y="273.2" width="1" height="4" fill="#009000"/><rect x="646" y="312.8" width="1" height="1" fill="#009000"/><rect x="650" y="275.2" width="1" height="2" fill="#009000"/><rect x="650" y="312.8" width="1" height="2" fill="#009000"/><rect x="658" y="312.8" width="1" height="3" fill="#009000"/><rect x="661" y="312.8" width="1" height="1" fill="#009000"/><rect x="663" y="312.8" width="1" height="1" fill="#009000"/><rect x="665" y="312.8" width="1" height="4" fill="#009000"/><rect x="669" y="312.8" width="1" height="4" fill="#009000"/><rect x="670" y="312.8" width="1" height="2" fill="#009000"/><rect x="671" y="312.8" width="1" height="2" fill="#009000"/><rect x="672" y="312.8" width="1" height="2" fill="#009000"/><rect x="676" y="276.2" width="1" height="1" fill="#009000"/><rect x="682" y="312.8" width="1" height="3" fill="#009000"/><rect x="685" y="273.2" width="1" height="4" fill="#009000"/><rect x="687" y="275.2" width="1" height="2" fill="#009000"/><rect x="687" y="312.8" width="1" height="2" fill="#009000"/><rect x="692" y="276.2" width="1" height="1" fill="#009000"/><rect x="696" y="276.2" width="1" height="1" fill="#009000"/><rect x="696" y="312.8" width="1" height="4" fill="#009000"/><rect x="702" y="276.2" width="1" height="1" fill="#009000"/><rect x="705" y="273.2" width="1" height="4" fill="#009000"/><rect x="705" y="312.8" width="1" height="2" fill="#009000"/><rect x="708" y="274.2" width="1" height="3" fill="#009000"/><rect x="708" y="312.8" width="1" height="2" fill="#009000"/><rect x="712" y="312.8" width="1" height="2" fill="#009000"/><rect x="716" y="275.2" width="1" height="2" fill="#009000"/><rect x="723" y="312.8" width="1" height="1" fill="#009000"/><rect x="725" y="274.2" width="1" height="3" fill="#009000"/><rect x="728" y="273.2" width="1" height="4" fill="#009000"/><rect x="728" y="312.8" width="1" height="3" fill="#009000"/><rect x="729" y="273.2" width="1" height="4" fill="#009000"/><rect x="729" y="312.8" width="1" height="4" fill="#009000"/><rect x="732" y="275.2" width="1" height="2" fill="#009000"/><rect x="732" y="312.8" width="1" height="2" fill="#009000"/><rect x="734" y="275.2" width="1" height="2" fill="#009000"/><rect x="734" y="312.8" width="1" height="2" fill="#009000"/><rect x="736" y="312.8" width="1" height="2" fill="#009000"/><rect x="737" y="276.2" width="1" height="1" fill="#009000"/><rect x="740" y="273.2" width="1" height="4" fill="#009000"/><rect x="744" y="273.2" width="1" height="4" fill="#009000"/><rect x="748" y="276.2" width="1" height="1" fill="#009000"/><rect x="748" y="312.8" width="1" height="3" fill="#009000"/><rect x="750" y="312.8" width="1" height="1" fill="#009000"/><rect x="752" y="312.8" width="1" height="2" fill="#009000"/><rect x="754" y="273.2" width="1" height="4" fill="#009000"/><rect x="757" y="312.8" width="1" height="2" fill="#009000"/><rect x="759" y="276.2" width="1" height="1" fill="#009000"/><rect x="759" y="312.8" width="1" height="3" fill="#009000"/><rect x="765" y="276.2" width="1" height="1" fill="#009000"/><rect x="765" y="312.8" width="1" height="2" fill="#009000"/><rect x="771" y="275.2" width="1" height="2" fill="#009000"/><rect x="771" y="312.8" width="1" height="3" fill="#009000"/><rect x="775" y="274.2" width="1" height="3" fill="#009000"/><rect x="775" y="312.8" width="1" height="4" fill="#009000"/><rect x="778" y="275.2" width="1" height="2" fill="#009000"/><rect x="782" y="276.2" width="1" height="1" fill="#009000"/><rect x="782" y="312.8" width="1" height="1" fill="#009000"/><rect x="783" y="312.8" width="1" height="2" fill="#009000"/><rect x="784" y="312.8" width="1" height="2" fill="#009000"/><rect x="786" y="273.2" width="1" height="4" fill="#009000"/><rect x="786" y="312.8" width="1" height="2" fill="#009000"/><rect x="791" y="312.8" width="1" height="3" fill="#009000"/><rect x="795" y="274.2" width="1" height="3" fill="#009000"/><rect x="800" y="312.8" width="1" height="1" fill="#009000"/><rect x="804" y="312.8" width="1" height="2" fill="#009000"/><rect x="808" y="312.8" width="1" height="2" fill="#009000"/><rect x="810" y="276.2" width="1" height="1" fill="#009000"/><rect x="810" y="312.8" width="1" height="4" fill="#009000"/><rect x="815" y="312.8" width="1" height="2" fill="#009000"/><rect x="820" y="312.8" width="1" height="4" fill="#009000"/><rect x="824" y="275.2" width="1" height="2" fill="#009000"/><rect x="824" y="312.8" width="1" height="1" fill="#009000"/><rect x="826" y="275.2" width="1" height="2" fill="#009000"/><rect x="826" y="312.8" width="1" height="1" fill="#009000"/><rect x="828" y="276.2" width="1" height="1" fill="#009000"/><rect x="828" y="312.8" width="1" height="2" fill="#009000"/><rect x="830" y="276.2" width="1" height="1" fill="#009000"/><rect x="830" y="312.8" width="1" height="2" fill="#009000"/><rect x="834" y="276.2" width="1" height="1" fill="#009000"/><rect x="834" y="312.8" width="1" height="1" fill="#009000"/><rect x="837" y="312.8" width="1" height="3" fill="#009000"/><rect x="841" y="312.8" width="1" height="4" fill="#009000"/><rect x="845" y="275.2" width="1" height="2" fill="#009000"/><rect x="845" y="312.8" width="1" height="2" fill="#009000"/><rect x="848" y="274.2" width="1" height="3" fill="#009000"/><rect x="848" y="312.8" width="1" height="1" fill="#009000"/><rect x="850" y="275.2" width="1" height="2" fill="#009000"/><rect x="850" y="312.8" width="1" height="4" fill="#009000"/><rect x="851" y="312.8" width="1" height="1" fill="#009000"/><rect x="859" y="274.2" width="1" height="3" fill="#009000"/><rect x="865" y="276.2" width="1" height="1" fill="#009000"/><rect x="865" y="312.8" width="1" height="2" fill="#009000"/><rect x="869" y="274.2" width="1" height="3" fill="#009000"/><rect x="869" y="312.8" width="1" height="2" fill="#009000"/><rect x="873" y="276.2" width="1" height="1" fill="#009000"/><rect x="873" y="312.8" width="1" height="1" fill="#009000"/><rect x="875" y="275.2" width="1" height="2" fill="#009000"/><rect x="881" y="273.2" width="1" height="4" fill="#009000"/><rect x="884" y="275.2" width="1" height="2" fill="#009000"/><rect x="890" y="276.2" width="1" height="1" fill="#009000"/><rect x="892" y="312.8" width="1" height="2" fill="#009000"/><rect x="894" y="274.2" width="1" height="3" fill="#009000"/><rect x="894" y="312.8" width="1" height="4" fill="#009000"/><rect x="896" y="273.2" width="1" height="4" fill="#009000"/><rect x="896" y="312.8" width="1" height="1" fill="#009000"/><rect x="897" y="273.2" width="1" height="4" fill="#009000"/><rect x="905" y="276.2" width="1" height="1" fill="#009000"/><rect x="906" y="312.8" width="1" height="4" fill="#009000"/><rect x="908" y="273.2" width="1" height="4" fill="#009000"/><rect x="908" y="312.8" width="1" height="2" fill="#009000"/><rect x="909" y="275.2" width="1" height="2" fill="#009000"/><rect x="909" y="312.8" width="1" height="1" fill="#009000"/><rect x="910" y="276.2" width="1" height="1" fill="#009000"/><rect x="913" y="273.2" width="1" height="4" fill="#009000"/><rect x="916" y="312.8" width="1" height="1" fill="#009000"/><rect x="917" y="274.2" width="1" height="3" fill="#009000"/><rect x="917" y="312.8" width="1" height="3" fill="#009000"/><rect x="919" y="276.2" width="1" height="1" fill="#009000"/><rect x="919" y="312.8" width="1" height="3" fill="#009000"/><rect x="921" y="312.8" width="1" height="3" fill="#009000"/><rect x="925" y="274.2" width="1" height="3" fill="#009000"/><rect x="925" y="312.8" width="1" height="4" fill="#009000"/><rect x="929" y="312.8" width="1" height="2" fill="#009000"/><rect x="930" y="276.2" width="1" height="1" fill="#009000"/><rect x="930" y="312.8" width="1" height="2" fill="#009000"/><rect x="933" y="275.2" width="1" height="2" fill="#009000"/><rect x="936" y="276.2" width="1" height="1" fill="#009000"/><rect x="936" y="312.8" width="1" height="1" fill="#009000"/><rect x="940" y="276.2" width="1" height="1" fill="#009000"/><rect x="940" y="312.8" width="1" height="4" fill="#009000"/><rect x="943" y="273.2" width="1" height="4" fill="#009000"/><rect x="943" y="312.8" width="1" height="2" fill="#009000"/><rect x="951" y="275.2" width="1" height="2" fill="#009000"/><rect x="951" y="312.8" width="1" height="2" fill="#009000"/><rect x="952" y="276.2" width="1" height="1" fill="#009000"/><rect x="954" y="274.2" width="1" height="3" fill="#009000"/><rect x="957" y="274.2" width="1" height="3" fill="#009000"/><rect x="958" y="275.2" width="1" height="2" fill="#009000"/><rect x="958" y="312.8" width="1" height="3" fill="#009000"/><rect x="959" y="275.2" width="1" height="2" fill="#009000"/><rect x="965" y="275.2" width="1" height="2" fill="#009000"/><rect x="967" y="273.2" width="1" height="4" fill="#009000"/><rect x="968" y="312.8" width="1" height="2" fill="#009000"/><rect x="970" y="276.2" width="1" height="1" fill="#009000"/><rect x="974" y="312.8" width="1" height="1" fill="#009000"/><rect x="977" y="312.8" width="1" height="3" fill="#009000"/><rect x="985" y="312.8" width="1" height="2" fill="#009000"/><rect x="988" y="312.8" width="1" height="4" fill="#009000"/><rect x="989" y="274.2" width="1" height="3" fill="#009000"/><rect x="989" y="312.8" width="1" height="2" fill="#009000"/><rect x="993" y="275.2" width="1" height="2" fill="#009000"/><rect x="993" y="312.8" width="1" height="1" fill="#009000"/><rect x="995" y="274.2" width="1" height="3" fill="#009000"/><rect x="997" y="275.2" width="1" height="2" fill="#009000"/><rect x="997" y="312.8" width="1" height="3" fill="#009000"/><rect x="1001" y="276.2" width="1" height="1" fill="#009000"/><rect x="1001" y="312.8" width="1" height="4" fill="#009000"/><rect x="1006" y="276.2" width="1" height="1" fill="#009000"/><rect x="1011" y="274.2" width="1" height="3" fill="#009000"/><rect x="1011" y="312.8" width="1" height="2" fill="#009000"/><rect x="1014" y="274.2" width="1" height="3" fill="#009000"/><rect x="1014" y="312.8" width="1" height="4" fill="#009000"/><rect x="1016" y="274.2" width="1" height="3" fill="#009000"/><rect x="1016" y="312.8" width="1" height="1" fill="#009000"/><rect x="1019" y="276.2" width="1" height="1" fill="#009000"/><rect x="1019" y="312.8" width="1" height="1" fill="#009000"/><rect x="1023" y="312.8" width="1" height="4" fill="#009000"/><rect x="1024" y="276.2" width="1" height="1" fill="#009000"/><rect x="1024" y="312.8" width="1" height="4" fill="#009000"/><rect x="1026" y="312.8" width="1" height="2" fill="#009000"/><rect x="1027" y="273.2" width="1" height="4" fill="#009000"/><rect x="1027" y="312.8" width="1" height="1" fill="#009000"/><rect x="1028" y="276.2" width="1" height="1" fill="#009000"/><rect x="1030" y="276.2" width="1" height="1" fill="#009000"/><rect x="1030" y="312.8" width="1" height="4" fill="#009000"/><rect x="1032" y="312.8" width="1" height="4" fill="#009000"/><rect x="23.0" y="349.5" width="279.0" height="22.7" fill="url(#g5)"/><rect x="339.0" y="349.5" width="170.2" height="22.7" fill="url(#g5)"/><rect x="24" y="348.5" width="1" height="1" fill="#0a949c"/><rect x="26" y="347.5" width="1" height="2" fill="#0a949c"/><rect x="29" y="347.5" width="1" height="2" fill="#0a949c"/><rect x="29" y="372.2" width="1" height="2" fill="#0a949c"/><rect x="32" y="372.2" width="1" height="3" fill="#0a949c"/><rect x="34" y="348.5" width="1" height="1" fill="#0a949c"/><rect x="34" y="372.2" width="1" height="2" fill="#0a949c"/><rect x="37" y="346.5" width="1" height="3" fill="#0a949c"/><rect x="37" y="372.2" width="1" height="2" fill="#0a949c"/><rect x="44" y="372.2" width="1" height="2" fill="#0a949c"/><rect x="48" y="345.5" width="1" height="4" fill="#0a949c"/><rect x="51" y="347.5" width="1" height="2" fill="#0a949c"/><rect x="51" y="372.2" width="1" height="1" fill="#0a949c"/><rect x="53" y="347.5" width="1" height="2" fill="#0a949c"/><rect x="53" y="372.2" width="1" height="2" fill="#0a949c"/><rect x="55" y="372.2" width="1" height="1" fill="#0a949c"/><rect x="58" y="348.5" width="1" height="1" fill="#0a949c"/><rect x="58" y="372.2" width="1" height="4" fill="#0a949c"/><rect x="59" y="372.2" width="1" height="2" fill="#0a949c"/><rect x="62" y="348.5" width="1" height="1" fill="#0a949c"/><rect x="62" y="372.2" width="1" height="1" fill="#0a949c"/><rect x="64" y="372.2" width="1" height="1" fill="#0a949c"/><rect x="67" y="348.5" width="1" height="1" fill="#0a949c"/><rect x="71" y="347.5" width="1" height="2" fill="#0a949c"/><rect x="71" y="372.2" width="1" height="2" fill="#0a949c"/><rect x="80" y="348.5" width="1" height="1" fill="#0a949c"/><rect x="81" y="372.2" width="1" height="3" fill="#0a949c"/><rect x="87" y="346.5" width="1" height="3" fill="#0a949c"/><rect x="87" y="372.2" width="1" height="1" fill="#0a949c"/><rect x="95" y="348.5" width="1" height="1" fill="#0a949c"/><rect x="95" y="372.2" width="1" height="1" fill="#0a949c"/><rect x="97" y="347.5" width="1" height="2" fill="#0a949c"/><rect x="97" y="372.2" width="1" height="4" fill="#0a949c"/><rect x="100" y="347.5" width="1" height="2" fill="#0a949c"/><rect x="100" y="372.2" width="1" height="1" fill="#0a949c"/><rect x="104" y="372.2" width="1" height="4" fill="#0a949c"/><rect x="115" y="345.5" width="1" height="4" fill="#0a949c"/><rect x="118" y="372.2" width="1" height="2" fill="#0a949c"/><rect x="120" y="346.5" width="1" height="3" fill="#0a949c"/><rect x="122" y="372.2" width="1" height="4" fill="#0a949c"/><rect x="123" y="347.5" width="1" height="2" fill="#0a949c"/><rect x="125" y="372.2" width="1" height="2" fill="#0a949c"/><rect x="130" y="372.2" width="1" height="2" fill="#0a949c"/><rect x="133" y="348.5" width="1" height="1" fill="#0a949c"/><rect x="133" y="372.2" width="1" height="2" fill="#0a949c"/><rect x="137" y="347.5" width="1" height="2" fill="#0a949c"/><rect x="137" y="372.2" width="1" height="4" fill="#0a949c"/><rect x="141" y="372.2" width="1" height="1" fill="#0a949c"/><rect x="142" y="348.5" width="1" height="1" fill="#0a949c"/><rect x="142" y="372.2" width="1" height="4" fill="#0a949c"/><rect x="146" y="372.2" width="1" height="2" fill="#0a949c"/><rect x="150" y="347.5" width="1" height="2" fill="#0a949c"/><rect x="150" y="372.2" width="1" height="2" fill="#0a949c"/><rect x="153" y="348.5" width="1" height="1" fill="#0a949c"/><rect x="153" y="372.2" width="1" height="4" fill="#0a949c"/><rect x="157" y="347.5" width="1" height="2" fill="#0a949c"/><rect x="158" y="345.5" width="1" height="4" fill="#0a949c"/><rect x="158" y="372.2" width="1" height="1" fill="#0a949c"/><rect x="160" y="348.5" width="1" height="1" fill="#0a949c"/><rect x="160" y="372.2" width="1" height="2" fill="#0a949c"/><rect x="164" y="347.5" width="1" height="2" fill="#0a949c"/><rect x="167" y="372.2" width="1" height="2" fill="#0a949c"/><rect x="168" y="346.5" width="1" height="3" fill="#0a949c"/><rect x="179" y="348.5" width="1" height="1" fill="#0a949c"/><rect x="182" y="347.5" width="1" height="2" fill="#0a949c"/><rect x="182" y="372.2" width="1" height="3" fill="#0a949c"/><rect x="186" y="347.5" width="1" height="2" fill="#0a949c"/><rect x="186" y="372.2" width="1" height="1" fill="#0a949c"/><rect x="187" y="345.5" width="1" height="4" fill="#0a949c"/><rect x="191" y="372.2" width="1" height="2" fill="#0a949c"/><rect x="195" y="372.2" width="1" height="1" fill="#0a949c"/><rect x="197" y="347.5" width="1" height="2" fill="#0a949c"/><rect x="197" y="372.2" width="1" height="1" fill="#0a949c"/><rect x="201" y="346.5" width="1" height="3" fill="#0a949c"/><rect x="201" y="372.2" width="1" height="2" fill="#0a949c"/><rect x="202" y="372.2" width="1" height="4" fill="#0a949c"/><rect x="205" y="372.2" width="1" height="4" fill="#0a949c"/><rect x="208" y="347.5" width="1" height="2" fill="#0a949c"/><rect x="210" y="372.2" width="1" height="2" fill="#0a949c"/><rect x="212" y="372.2" width="1" height="1" fill="#0a949c"/><rect x="216" y="345.5" width="1" height="4" fill="#0a949c"/><rect x="220" y="372.2" width="1" height="2" fill="#0a949c"/><rect x="221" y="347.5" width="1" height="2" fill="#0a949c"/><rect x="229" y="347.5" width="1" height="2" fill="#0a949c"/><rect x="232" y="372.2" width="1" height="2" fill="#0a949c"/><rect x="234" y="347.5" width="1" height="2" fill="#0a949c"/><rect x="238" y="348.5" width="1" height="1" fill="#0a949c"/><rect x="238" y="372.2" width="1" height="1" fill="#0a949c"/><rect x="241" y="372.2" width="1" height="4" fill="#0a949c"/><rect x="242" y="347.5" width="1" height="2" fill="#0a949c"/><rect x="242" y="372.2" width="1" height="1" fill="#0a949c"/><rect x="244" y="347.5" width="1" height="2" fill="#0a949c"/><rect x="244" y="372.2" width="1" height="2" fill="#0a949c"/><rect x="245" y="372.2" width="1" height="1" fill="#0a949c"/><rect x="248" y="347.5" width="1" height="2" fill="#0a949c"/><rect x="248" y="372.2" width="1" height="1" fill="#0a949c"/><rect x="249" y="347.5" width="1" height="2" fill="#0a949c"/><rect x="249" y="372.2" width="1" height="3" fill="#0a949c"/><rect x="251" y="347.5" width="1" height="2" fill="#0a949c"/><rect x="255" y="347.5" width="1" height="2" fill="#0a949c"/><rect x="255" y="372.2" width="1" height="2" fill="#0a949c"/><rect x="258" y="348.5" width="1" height="1" fill="#0a949c"/><rect x="261" y="348.5" width="1" height="1" fill="#0a949c"/><rect x="261" y="372.2" width="1" height="3" fill="#0a949c"/><rect x="263" y="347.5" width="1" height="2" fill="#0a949c"/><rect x="263" y="372.2" width="1" height="1" fill="#0a949c"/><rect x="265" y="346.5" width="1" height="3" fill="#0a949c"/><rect x="265" y="372.2" width="1" height="3" fill="#0a949c"/><rect x="269" y="348.5" width="1" height="1" fill="#0a949c"/><rect x="269" y="372.2" width="1" height="1" fill="#0a949c"/><rect x="272" y="348.5" width="1" height="1" fill="#0a949c"/><rect x="272" y="372.2" width="1" height="2" fill="#0a949c"/><rect x="274" y="348.5" width="1" height="1" fill="#0a949c"/><rect x="278" y="348.5" width="1" height="1" fill="#0a949c"/><rect x="278" y="372.2" width="1" height="2" fill="#0a949c"/><rect x="282" y="348.5" width="1" height="1" fill="#0a949c"/><rect x="282" y="372.2" width="1" height="2" fill="#0a949c"/><rect x="286" y="372.2" width="1" height="2" fill="#0a949c"/><rect x="288" y="345.5" width="1" height="4" fill="#0a949c"/><rect x="290" y="372.2" width="1" height="3" fill="#0a949c"/><rect x="294" y="372.2" width="1" height="1" fill="#0a949c"/><rect x="298" y="346.5" width="1" height="3" fill="#0a949c"/><rect x="299" y="372.2" width="1" height="1" fill="#0a949c"/><rect x="340" y="346.5" width="1" height="3" fill="#0a949c"/><rect x="340" y="372.2" width="1" height="2" fill="#0a949c"/><rect x="341" y="372.2" width="1" height="2" fill="#0a949c"/><rect x="342" y="345.5" width="1" height="4" fill="#0a949c"/><rect x="342" y="372.2" width="1" height="4" fill="#0a949c"/><rect x="344" y="372.2" width="1" height="2" fill="#0a949c"/><rect x="346" y="347.5" width="1" height="2" fill="#0a949c"/><rect x="346" y="372.2" width="1" height="1" fill="#0a949c"/><rect x="347" y="372.2" width="1" height="2" fill="#0a949c"/><rect x="348" y="372.2" width="1" height="3" fill="#0a949c"/><rect x="352" y="347.5" width="1" height="2" fill="#0a949c"/><rect x="352" y="372.2" width="1" height="3" fill="#0a949c"/><rect x="355" y="348.5" width="1" height="1" fill="#0a949c"/><rect x="360" y="348.5" width="1" height="1" fill="#0a949c"/><rect x="360" y="372.2" width="1" height="4" fill="#0a949c"/><rect x="363" y="372.2" width="1" height="2" fill="#0a949c"/><rect x="365" y="372.2" width="1" height="1" fill="#0a949c"/><rect x="366" y="372.2" width="1" height="1" fill="#0a949c"/><rect x="367" y="372.2" width="1" height="1" fill="#0a949c"/><rect x="374" y="345.5" width="1" height="4" fill="#0a949c"/><rect x="374" y="372.2" width="1" height="3" fill="#0a949c"/><rect x="378" y="372.2" width="1" height="2" fill="#0a949c"/><rect x="380" y="345.5" width="1" height="4" fill="#0a949c"/><rect x="383" y="372.2" width="1" height="4" fill="#0a949c"/><rect x="384" y="348.5" width="1" height="1" fill="#0a949c"/><rect x="384" y="372.2" width="1" height="2" fill="#0a949c"/><rect x="388" y="372.2" width="1" height="2" fill="#0a949c"/><rect x="391" y="345.5" width="1" height="4" fill="#0a949c"/><rect x="397" y="372.2" width="1" height="2" fill="#0a949c"/><rect x="401" y="372.2" width="1" height="2" fill="#0a949c"/><rect x="403" y="372.2" width="1" height="2" fill="#0a949c"/><rect x="412" y="345.5" width="1" height="4" fill="#0a949c"/><rect x="412" y="372.2" width="1" height="4" fill="#0a949c"/><rect x="413" y="372.2" width="1" height="1" fill="#0a949c"/><rect x="419" y="348.5" width="1" height="1" fill="#0a949c"/><rect x="427" y="348.5" width="1" height="1" fill="#0a949c"/><rect x="427" y="372.2" width="1" height="2" fill="#0a949c"/><rect x="431" y="347.5" width="1" height="2" fill="#0a949c"/><rect x="437" y="372.2" width="1" height="2" fill="#0a949c"/><rect x="438" y="372.2" width="1" height="2" fill="#0a949c"/><rect x="441" y="372.2" width="1" height="3" fill="#0a949c"/><rect x="444" y="348.5" width="1" height="1" fill="#0a949c"/><rect x="444" y="372.2" width="1" height="4" fill="#0a949c"/><rect x="446" y="372.2" width="1" height="2" fill="#0a949c"/><rect x="447" y="347.5" width="1" height="2" fill="#0a949c"/><rect x="449" y="346.5" width="1" height="3" fill="#0a949c"/><rect x="453" y="347.5" width="1" height="2" fill="#0a949c"/><rect x="453" y="372.2" width="1" height="2" fill="#0a949c"/><rect x="457" y="347.5" width="1" height="2" fill="#0a949c"/><rect x="458" y="348.5" width="1" height="1" fill="#0a949c"/><rect x="462" y="372.2" width="1" height="3" fill="#0a949c"/><rect x="465" y="347.5" width="1" height="2" fill="#0a949c"/><rect x="465" y="372.2" width="1" height="2" fill="#0a949c"/><rect x="466" y="372.2" width="1" height="1" fill="#0a949c"/><rect x="467" y="348.5" width="1" height="1" fill="#0a949c"/><rect x="467" y="372.2" width="1" height="2" fill="#0a949c"/><rect x="471" y="345.5" width="1" height="4" fill="#0a949c"/><rect x="477" y="372.2" width="1" height="3" fill="#0a949c"/><rect x="481" y="372.2" width="1" height="3" fill="#0a949c"/><rect x="483" y="345.5" width="1" height="4" fill="#0a949c"/><rect x="483" y="372.2" width="1" height="1" fill="#0a949c"/><rect x="485" y="345.5" width="1" height="4" fill="#0a949c"/><rect x="485" y="372.2" width="1" height="2" fill="#0a949c"/><rect x="488" y="345.5" width="1" height="4" fill="#0a949c"/><rect x="488" y="372.2" width="1" height="4" fill="#0a949c"/><rect x="492" y="347.5" width="1" height="2" fill="#0a949c"/><rect x="493" y="348.5" width="1" height="1" fill="#0a949c"/><rect x="497" y="346.5" width="1" height="3" fill="#0a949c"/><rect x="499" y="372.2" width="1" height="1" fill="#0a949c"/><rect x="502" y="348.5" width="1" height="1" fill="#0a949c"/><rect x="507" y="347.5" width="1" height="2" fill="#0a949c"/><rect x="507" y="372.2" width="1" height="1" fill="#0a949c"/><rect x="301.8" y="576.4" width="37.3" height="22.4" fill="url(#g6)"/><rect x="302" y="574.4" width="1" height="2" fill="#0a949c"/><rect x="304" y="575.4" width="1" height="1" fill="#0a949c"/><rect x="304" y="598.8" width="1" height="1" fill="#0a949c"/><rect x="305" y="573.4" width="1" height="3" fill="#0a949c"/><rect x="305" y="598.8" width="1" height="2" fill="#0a949c"/><rect x="309" y="598.8" width="1" height="1" fill="#0a949c"/><rect x="313" y="574.4" width="1" height="2" fill="#0a949c"/><rect x="313" y="598.8" width="1" height="3" fill="#0a949c"/><rect x="317" y="598.8" width="1" height="4" fill="#0a949c"/><rect x="319" y="572.4" width="1" height="4" fill="#0a949c"/><rect x="321" y="575.4" width="1" height="1" fill="#0a949c"/><rect x="321" y="598.8" width="1" height="2" fill="#0a949c"/><rect x="322" y="598.8" width="1" height="1" fill="#0a949c"/><rect x="324" y="598.8" width="1" height="1" fill="#0a949c"/><rect x="326" y="598.8" width="1" height="2" fill="#0a949c"/><rect x="327" y="598.8" width="1" height="2" fill="#0a949c"/><rect x="330" y="574.4" width="1" height="2" fill="#0a949c"/><rect x="330" y="598.8" width="1" height="2" fill="#0a949c"/><rect x="331" y="598.8" width="1" height="1" fill="#0a949c"/><rect x="335" y="573.4" width="1" height="3" fill="#0a949c"/><rect x="335" y="598.8" width="1" height="1" fill="#0a949c"/><rect x="301.2" y="372" width="1.2" height="205" fill="#1a9aa0"/><rect x="338.2" y="372" width="1.2" height="205" fill="#1a9aa0"/><rect x="508.6" y="345" width="1.2" height="12" fill="#1a9aa0"/><rect x="509.2" y="356.8" width="163.9" height="242.7" fill="url(#teal)"/><rect x="510" y="599.5" width="1" height="3" fill="#0a7e86"/><rect x="512" y="354.8" width="1" height="2" fill="#0a7c84"/><rect x="512" y="599.5" width="1" height="2" fill="#0a7e86"/><rect x="514" y="355.8" width="1" height="1" fill="#0a7c84"/><rect x="514" y="599.5" width="1" height="1" fill="#0a7e86"/><rect x="517" y="599.5" width="1" height="3" fill="#0a7e86"/><rect x="519" y="354.8" width="1" height="2" fill="#0a7c84"/><rect x="521" y="599.5" width="1" height="6" fill="#0a7e86"/><rect x="522" y="353.8" width="1" height="3" fill="#0a7c84"/><rect x="525" y="355.8" width="1" height="1" fill="#0a7c84"/><rect x="525" y="599.5" width="1" height="2" fill="#0a7e86"/><rect x="526" y="353.8" width="1" height="3" fill="#0a7c84"/><rect x="526" y="599.5" width="1" height="3" fill="#0a7e86"/><rect x="529" y="354.8" width="1" height="2" fill="#0a7c84"/><rect x="529" y="599.5" width="1" height="2" fill="#0a7e86"/><rect x="532" y="599.5" width="1" height="6" fill="#0a7e86"/><rect x="534" y="355.8" width="1" height="1" fill="#0a7c84"/><rect x="534" y="599.5" width="1" height="6" fill="#0a7e86"/><rect x="537" y="355.8" width="1" height="1" fill="#0a7c84"/><rect x="537" y="599.5" width="1" height="5" fill="#0a7e86"/><rect x="541" y="353.8" width="1" height="3" fill="#0a7c84"/><rect x="541" y="599.5" width="1" height="7" fill="#0a7e86"/><rect x="543" y="353.8" width="1" height="3" fill="#0a7c84"/><rect x="543" y="599.5" width="1" height="6" fill="#0a7e86"/><rect x="544" y="599.5" width="1" height="3" fill="#0a7e86"/><rect x="545" y="599.5" width="1" height="6" fill="#0a7e86"/><rect x="546" y="599.5" width="1" height="5" fill="#0a7e86"/><rect x="548" y="355.8" width="1" height="1" fill="#0a7c84"/><rect x="548" y="599.5" width="1" height="7" fill="#0a7e86"/><rect x="549" y="355.8" width="1" height="1" fill="#0a7c84"/><rect x="549" y="599.5" width="1" height="2" fill="#0a7e86"/><rect x="550" y="599.5" width="1" height="2" fill="#0a7e86"/><rect x="552" y="599.5" width="1" height="7" fill="#0a7e86"/><rect x="553" y="354.8" width="1" height="2" fill="#0a7c84"/><rect x="553" y="599.5" width="1" height="2" fill="#0a7e86"/><rect x="554" y="355.8" width="1" height="1" fill="#0a7c84"/><rect x="554" y="599.5" width="1" height="4" fill="#0a7e86"/><rect x="557" y="599.5" width="1" height="6" fill="#0a7e86"/><rect x="559" y="354.8" width="1" height="2" fill="#0a7c84"/><rect x="559" y="599.5" width="1" height="5" fill="#0a7e86"/><rect x="561" y="354.8" width="1" height="2" fill="#0a7c84"/><rect x="561" y="599.5" width="1" height="3" fill="#0a7e86"/><rect x="563" y="353.8" width="1" height="3" fill="#0a7c84"/><rect x="563" y="599.5" width="1" height="7" fill="#0a7e86"/><rect x="565" y="355.8" width="1" height="1" fill="#0a7c84"/><rect x="565" y="599.5" width="1" height="3" fill="#0a7e86"/><rect x="567" y="353.8" width="1" height="3" fill="#0a7c84"/><rect x="567" y="599.5" width="1" height="3" fill="#0a7e86"/><rect x="568" y="355.8" width="1" height="1" fill="#0a7c84"/><rect x="568" y="599.5" width="1" height="3" fill="#0a7e86"/><rect x="570" y="355.8" width="1" height="1" fill="#0a7c84"/><rect x="570" y="599.5" width="1" height="2" fill="#0a7e86"/><rect x="573" y="354.8" width="1" height="2" fill="#0a7c84"/><rect x="576" y="355.8" width="1" height="1" fill="#0a7c84"/><rect x="576" y="599.5" width="1" height="4" fill="#0a7e86"/><rect x="577" y="353.8" width="1" height="3" fill="#0a7c84"/><rect x="577" y="599.5" width="1" height="5" fill="#0a7e86"/><rect x="579" y="355.8" width="1" height="1" fill="#0a7c84"/><rect x="579" y="599.5" width="1" height="3" fill="#0a7e86"/><rect x="581" y="355.8" width="1" height="1" fill="#0a7c84"/><rect x="583" y="353.8" width="1" height="3" fill="#0a7c84"/><rect x="584" y="353.8" width="1" height="3" fill="#0a7c84"/><rect x="584" y="599.5" width="1" height="3" fill="#0a7e86"/><rect x="586" y="354.8" width="1" height="2" fill="#0a7c84"/><rect x="586" y="599.5" width="1" height="2" fill="#0a7e86"/><rect x="588" y="354.8" width="1" height="2" fill="#0a7c84"/><rect x="588" y="599.5" width="1" height="6" fill="#0a7e86"/><rect x="591" y="353.8" width="1" height="3" fill="#0a7c84"/><rect x="591" y="599.5" width="1" height="3" fill="#0a7e86"/><rect x="593" y="599.5" width="1" height="2" fill="#0a7e86"/><rect x="595" y="355.8" width="1" height="1" fill="#0a7c84"/><rect x="595" y="599.5" width="1" height="6" fill="#0a7e86"/><rect x="598" y="354.8" width="1" height="2" fill="#0a7c84"/><rect x="598" y="599.5" width="1" height="7" fill="#0a7e86"/><rect x="600" y="355.8" width="1" height="1" fill="#0a7c84"/><rect x="600" y="599.5" width="1" height="3" fill="#0a7e86"/><rect x="602" y="355.8" width="1" height="1" fill="#0a7c84"/><rect x="602" y="599.5" width="1" height="4" fill="#0a7e86"/><rect x="605" y="353.8" width="1" height="3" fill="#0a7c84"/><rect x="605" y="599.5" width="1" height="2" fill="#0a7e86"/><rect x="608" y="354.8" width="1" height="2" fill="#0a7c84"/><rect x="608" y="599.5" width="1" height="5" fill="#0a7e86"/><rect x="611" y="355.8" width="1" height="1" fill="#0a7c84"/><rect x="611" y="599.5" width="1" height="3" fill="#0a7e86"/><rect x="614" y="599.5" width="1" height="7" fill="#0a7e86"/><rect x="616" y="353.8" width="1" height="3" fill="#0a7c84"/><rect x="616" y="599.5" width="1" height="7" fill="#0a7e86"/><rect x="617" y="354.8" width="1" height="2" fill="#0a7c84"/><rect x="617" y="599.5" width="1" height="5" fill="#0a7e86"/><rect x="619" y="355.8" width="1" height="1" fill="#0a7c84"/><rect x="621" y="599.5" width="1" height="7" fill="#0a7e86"/><rect x="623" y="599.5" width="1" height="6" fill="#0a7e86"/><rect x="624" y="355.8" width="1" height="1" fill="#0a7c84"/><rect x="627" y="354.8" width="1" height="2" fill="#0a7c84"/><rect x="629" y="354.8" width="1" height="2" fill="#0a7c84"/><rect x="630" y="354.8" width="1" height="2" fill="#0a7c84"/><rect x="631" y="599.5" width="1" height="4" fill="#0a7e86"/><rect x="633" y="599.5" width="1" height="3" fill="#0a7e86"/><rect x="635" y="353.8" width="1" height="3" fill="#0a7c84"/><rect x="635" y="599.5" width="1" height="3" fill="#0a7e86"/><rect x="638" y="354.8" width="1" height="2" fill="#0a7c84"/><rect x="638" y="599.5" width="1" height="3" fill="#0a7e86"/><rect x="640" y="354.8" width="1" height="2" fill="#0a7c84"/><rect x="640" y="599.5" width="1" height="3" fill="#0a7e86"/><rect x="643" y="354.8" width="1" height="2" fill="#0a7c84"/><rect x="643" y="599.5" width="1" height="2" fill="#0a7e86"/><rect x="645" y="353.8" width="1" height="3" fill="#0a7c84"/><rect x="645" y="599.5" width="1" height="4" fill="#0a7e86"/><rect x="647" y="354.8" width="1" height="2" fill="#0a7c84"/><rect x="647" y="599.5" width="1" height="3" fill="#0a7e86"/><rect x="649" y="354.8" width="1" height="2" fill="#0a7c84"/><rect x="649" y="599.5" width="1" height="5" fill="#0a7e86"/><rect x="651" y="353.8" width="1" height="3" fill="#0a7c84"/><rect x="651" y="599.5" width="1" height="3" fill="#0a7e86"/><rect x="653" y="355.8" width="1" height="1" fill="#0a7c84"/><rect x="653" y="599.5" width="1" height="2" fill="#0a7e86"/><rect x="654" y="354.8" width="1" height="2" fill="#0a7c84"/><rect x="656" y="599.5" width="1" height="6" fill="#0a7e86"/><rect x="657" y="599.5" width="1" height="1" fill="#0a7e86"/><rect x="660" y="354.8" width="1" height="2" fill="#0a7c84"/><rect x="662" y="355.8" width="1" height="1" fill="#0a7c84"/><rect x="662" y="599.5" width="1" height="3" fill="#0a7e86"/><rect x="665" y="354.8" width="1" height="2" fill="#0a7c84"/><rect x="665" y="599.5" width="1" height="5" fill="#0a7e86"/><rect x="668" y="355.8" width="1" height="1" fill="#0a7c84"/><rect x="668" y="599.5" width="1" height="6" fill="#0a7e86"/><rect x="670" y="355.8" width="1" height="1" fill="#0a7c84"/><rect x="670" y="599.5" width="1" height="3" fill="#0a7e86"/><rect x="671" y="353.8" width="1" height="3" fill="#0a7c84"/><rect x="671" y="599.5" width="1" height="2" fill="#0a7e86"/><rect x="677.3" y="356.8" width="165.3" height="242.7" fill="url(#teal)"/><rect x="678" y="353.8" width="1" height="3" fill="#0a7c84"/><rect x="678" y="599.5" width="1" height="1" fill="#0a7e86"/><rect x="680" y="354.8" width="1" height="2" fill="#0a7c84"/><rect x="680" y="599.5" width="1" height="7" fill="#0a7e86"/><rect x="682" y="355.8" width="1" height="1" fill="#0a7c84"/><rect x="683" y="353.8" width="1" height="3" fill="#0a7c84"/><rect x="683" y="599.5" width="1" height="3" fill="#0a7e86"/><rect x="686" y="354.8" width="1" height="2" fill="#0a7c84"/><rect x="686" y="599.5" width="1" height="7" fill="#0a7e86"/><rect x="688" y="353.8" width="1" height="3" fill="#0a7c84"/><rect x="688" y="599.5" width="1" height="5" fill="#0a7e86"/><rect x="690" y="355.8" width="1" height="1" fill="#0a7c84"/><rect x="691" y="355.8" width="1" height="1" fill="#0a7c84"/><rect x="691" y="599.5" width="1" height="3" fill="#0a7e86"/><rect x="693" y="354.8" width="1" height="2" fill="#0a7c84"/><rect x="693" y="599.5" width="1" height="6" fill="#0a7e86"/><rect x="695" y="599.5" width="1" height="5" fill="#0a7e86"/><rect x="697" y="354.8" width="1" height="2" fill="#0a7c84"/><rect x="697" y="599.5" width="1" height="4" fill="#0a7e86"/><rect x="698" y="354.8" width="1" height="2" fill="#0a7c84"/><rect x="700" y="599.5" width="1" height="6" fill="#0a7e86"/><rect x="702" y="355.8" width="1" height="1" fill="#0a7c84"/><rect x="702" y="599.5" width="1" height="3" fill="#0a7e86"/><rect x="705" y="354.8" width="1" height="2" fill="#0a7c84"/><rect x="705" y="599.5" width="1" height="5" fill="#0a7e86"/><rect x="708" y="354.8" width="1" height="2" fill="#0a7c84"/><rect x="708" y="599.5" width="1" height="2" fill="#0a7e86"/><rect x="711" y="354.8" width="1" height="2" fill="#0a7c84"/><rect x="711" y="599.5" width="1" height="5" fill="#0a7e86"/><rect x="714" y="354.8" width="1" height="2" fill="#0a7c84"/><rect x="714" y="599.5" width="1" height="2" fill="#0a7e86"/><rect x="717" y="355.8" width="1" height="1" fill="#0a7c84"/><rect x="717" y="599.5" width="1" height="2" fill="#0a7e86"/><rect x="719" y="355.8" width="1" height="1" fill="#0a7c84"/><rect x="719" y="599.5" width="1" height="6" fill="#0a7e86"/><rect x="721" y="354.8" width="1" height="2" fill="#0a7c84"/><rect x="721" y="599.5" width="1" height="3" fill="#0a7e86"/><rect x="722" y="599.5" width="1" height="3" fill="#0a7e86"/><rect x="725" y="353.8" width="1" height="3" fill="#0a7c84"/><rect x="725" y="599.5" width="1" height="7" fill="#0a7e86"/><rect x="727" y="355.8" width="1" height="1" fill="#0a7c84"/><rect x="727" y="599.5" width="1" height="6" fill="#0a7e86"/><rect x="730" y="353.8" width="1" height="3" fill="#0a7c84"/><rect x="730" y="599.5" width="1" height="6" fill="#0a7e86"/><rect x="733" y="353.8" width="1" height="3" fill="#0a7c84"/><rect x="733" y="599.5" width="1" height="3" fill="#0a7e86"/><rect x="734" y="599.5" width="1" height="7" fill="#0a7e86"/><rect x="736" y="355.8" width="1" height="1" fill="#0a7c84"/><rect x="736" y="599.5" width="1" height="3" fill="#0a7e86"/><rect x="738" y="353.8" width="1" height="3" fill="#0a7c84"/><rect x="738" y="599.5" width="1" height="3" fill="#0a7e86"/><rect x="740" y="355.8" width="1" height="1" fill="#0a7c84"/><rect x="742" y="353.8" width="1" height="3" fill="#0a7c84"/><rect x="742" y="599.5" width="1" height="5" fill="#0a7e86"/><rect x="746" y="354.8" width="1" height="2" fill="#0a7c84"/><rect x="746" y="599.5" width="1" height="3" fill="#0a7e86"/><rect x="748" y="354.8" width="1" height="2" fill="#0a7c84"/><rect x="748" y="599.5" width="1" height="7" fill="#0a7e86"/><rect x="751" y="355.8" width="1" height="1" fill="#0a7c84"/><rect x="754" y="355.8" width="1" height="1" fill="#0a7c84"/><rect x="754" y="599.5" width="1" height="2" fill="#0a7e86"/><rect x="756" y="599.5" width="1" height="2" fill="#0a7e86"/><rect x="757" y="599.5" width="1" height="7" fill="#0a7e86"/><rect x="762" y="354.8" width="1" height="2" fill="#0a7c84"/><rect x="764" y="355.8" width="1" height="1" fill="#0a7c84"/><rect x="764" y="599.5" width="1" height="1" fill="#0a7e86"/><rect x="767" y="354.8" width="1" height="2" fill="#0a7c84"/><rect x="767" y="599.5" width="1" height="2" fill="#0a7e86"/><rect x="769" y="355.8" width="1" height="1" fill="#0a7c84"/><rect x="769" y="599.5" width="1" height="4" fill="#0a7e86"/><rect x="772" y="354.8" width="1" height="2" fill="#0a7c84"/><rect x="772" y="599.5" width="1" height="3" fill="#0a7e86"/><rect x="774" y="599.5" width="1" height="3" fill="#0a7e86"/><rect x="777" y="355.8" width="1" height="1" fill="#0a7c84"/><rect x="777" y="599.5" width="1" height="5" fill="#0a7e86"/><rect x="779" y="355.8" width="1" height="1" fill="#0a7c84"/><rect x="779" y="599.5" width="1" height="1" fill="#0a7e86"/><rect x="782" y="354.8" width="1" height="2" fill="#0a7c84"/><rect x="784" y="354.8" width="1" height="2" fill="#0a7c84"/><rect x="784" y="599.5" width="1" height="4" fill="#0a7e86"/><rect x="786" y="354.8" width="1" height="2" fill="#0a7c84"/><rect x="786" y="599.5" width="1" height="2" fill="#0a7e86"/><rect x="787" y="355.8" width="1" height="1" fill="#0a7c84"/><rect x="787" y="599.5" width="1" height="4" fill="#0a7e86"/><rect x="790" y="354.8" width="1" height="2" fill="#0a7c84"/><rect x="790" y="599.5" width="1" height="2" fill="#0a7e86"/><rect x="792" y="355.8" width="1" height="1" fill="#0a7c84"/><rect x="792" y="599.5" width="1" height="4" fill="#0a7e86"/><rect x="794" y="354.8" width="1" height="2" fill="#0a7c84"/><rect x="796" y="599.5" width="1" height="3" fill="#0a7e86"/><rect x="799" y="599.5" width="1" height="6" fill="#0a7e86"/><rect x="800" y="353.8" width="1" height="3" fill="#0a7c84"/><rect x="800" y="599.5" width="1" height="4" fill="#0a7e86"/><rect x="801" y="599.5" width="1" height="5" fill="#0a7e86"/><rect x="802" y="355.8" width="1" height="1" fill="#0a7c84"/><rect x="802" y="599.5" width="1" height="2" fill="#0a7e86"/><rect x="804" y="353.8" width="1" height="3" fill="#0a7c84"/><rect x="804" y="599.5" width="1" height="6" fill="#0a7e86"/><rect x="806" y="354.8" width="1" height="2" fill="#0a7c84"/><rect x="808" y="355.8" width="1" height="1" fill="#0a7c84"/><rect x="808" y="599.5" width="1" height="2" fill="#0a7e86"/><rect x="810" y="354.8" width="1" height="2" fill="#0a7c84"/><rect x="811" y="355.8" width="1" height="1" fill="#0a7c84"/><rect x="811" y="599.5" width="1" height="3" fill="#0a7e86"/><rect x="813" y="355.8" width="1" height="1" fill="#0a7c84"/><rect x="813" y="599.5" width="1" height="7" fill="#0a7e86"/><rect x="815" y="354.8" width="1" height="2" fill="#0a7c84"/><rect x="815" y="599.5" width="1" height="2" fill="#0a7e86"/><rect x="818" y="354.8" width="1" height="2" fill="#0a7c84"/><rect x="818" y="599.5" width="1" height="7" fill="#0a7e86"/><rect x="820" y="355.8" width="1" height="1" fill="#0a7c84"/><rect x="820" y="599.5" width="1" height="1" fill="#0a7e86"/><rect x="823" y="355.8" width="1" height="1" fill="#0a7c84"/><rect x="823" y="599.5" width="1" height="7" fill="#0a7e86"/><rect x="825" y="354.8" width="1" height="2" fill="#0a7c84"/><rect x="827" y="599.5" width="1" height="3" fill="#0a7e86"/><rect x="829" y="355.8" width="1" height="1" fill="#0a7c84"/><rect x="832" y="353.8" width="1" height="3" fill="#0a7c84"/><rect x="832" y="599.5" width="1" height="3" fill="#0a7e86"/><rect x="833" y="599.5" width="1" height="4" fill="#0a7e86"/><rect x="835" y="354.8" width="1" height="2" fill="#0a7c84"/><rect x="835" y="599.5" width="1" height="3" fill="#0a7e86"/><rect x="837" y="355.8" width="1" height="1" fill="#0a7c84"/><rect x="837" y="599.5" width="1" height="1" fill="#0a7e86"/><rect x="841" y="355.8" width="1" height="1" fill="#0a7c84"/><rect x="841" y="599.5" width="1" height="5" fill="#0a7e86"/><rect x="847.4" y="356.8" width="164.8" height="242.7" fill="url(#teal)"/><rect x="848" y="354.8" width="1" height="2" fill="#0a7c84"/><rect x="848" y="599.5" width="1" height="3" fill="#0a7e86"/><rect x="851" y="355.8" width="1" height="1" fill="#0a7c84"/><rect x="851" y="599.5" width="1" height="1" fill="#0a7e86"/><rect x="853" y="353.8" width="1" height="3" fill="#0a7c84"/><rect x="853" y="599.5" width="1" height="6" fill="#0a7e86"/><rect x="855" y="353.8" width="1" height="3" fill="#0a7c84"/><rect x="858" y="354.8" width="1" height="2" fill="#0a7c84"/><rect x="858" y="599.5" width="1" height="6" fill="#0a7e86"/><rect x="860" y="353.8" width="1" height="3" fill="#0a7c84"/><rect x="860" y="599.5" width="1" height="2" fill="#0a7e86"/><rect x="861" y="354.8" width="1" height="2" fill="#0a7c84"/><rect x="861" y="599.5" width="1" height="1" fill="#0a7e86"/><rect x="864" y="355.8" width="1" height="1" fill="#0a7c84"/><rect x="864" y="599.5" width="1" height="2" fill="#0a7e86"/><rect x="866" y="354.8" width="1" height="2" fill="#0a7c84"/><rect x="866" y="599.5" width="1" height="1" fill="#0a7e86"/><rect x="869" y="355.8" width="1" height="1" fill="#0a7c84"/><rect x="869" y="599.5" width="1" height="2" fill="#0a7e86"/><rect x="871" y="599.5" width="1" height="3" fill="#0a7e86"/><rect x="873" y="354.8" width="1" height="2" fill="#0a7c84"/><rect x="873" y="599.5" width="1" height="2" fill="#0a7e86"/><rect x="875" y="355.8" width="1" height="1" fill="#0a7c84"/><rect x="875" y="599.5" width="1" height="3" fill="#0a7e86"/><rect x="878" y="599.5" width="1" height="2" fill="#0a7e86"/><rect x="881" y="599.5" width="1" height="3" fill="#0a7e86"/><rect x="882" y="355.8" width="1" height="1" fill="#0a7c84"/><rect x="882" y="599.5" width="1" height="1" fill="#0a7e86"/><rect x="883" y="354.8" width="1" height="2" fill="#0a7c84"/><rect x="883" y="599.5" width="1" height="2" fill="#0a7e86"/><rect x="884" y="599.5" width="1" height="2" fill="#0a7e86"/><rect x="885" y="355.8" width="1" height="1" fill="#0a7c84"/><rect x="887" y="354.8" width="1" height="2" fill="#0a7c84"/><rect x="887" y="599.5" width="1" height="3" fill="#0a7e86"/><rect x="890" y="599.5" width="1" height="2" fill="#0a7e86"/><rect x="894" y="355.8" width="1" height="1" fill="#0a7c84"/><rect x="894" y="599.5" width="1" height="3" fill="#0a7e86"/><rect x="896" y="355.8" width="1" height="1" fill="#0a7c84"/><rect x="897" y="355.8" width="1" height="1" fill="#0a7c84"/><rect x="897" y="599.5" width="1" height="6" fill="#0a7e86"/><rect x="900" y="599.5" width="1" height="6" fill="#0a7e86"/><rect x="902" y="354.8" width="1" height="2" fill="#0a7c84"/><rect x="902" y="599.5" width="1" height="2" fill="#0a7e86"/><rect x="904" y="354.8" width="1" height="2" fill="#0a7c84"/><rect x="906" y="599.5" width="1" height="6" fill="#0a7e86"/><rect x="908" y="354.8" width="1" height="2" fill="#0a7c84"/><rect x="912" y="354.8" width="1" height="2" fill="#0a7c84"/><rect x="914" y="599.5" width="1" height="3" fill="#0a7e86"/><rect x="917" y="354.8" width="1" height="2" fill="#0a7c84"/><rect x="919" y="354.8" width="1" height="2" fill="#0a7c84"/><rect x="919" y="599.5" width="1" height="1" fill="#0a7e86"/><rect x="921" y="353.8" width="1" height="3" fill="#0a7c84"/><rect x="921" y="599.5" width="1" height="7" fill="#0a7e86"/><rect x="922" y="354.8" width="1" height="2" fill="#0a7c84"/><rect x="922" y="599.5" width="1" height="3" fill="#0a7e86"/><rect x="924" y="355.8" width="1" height="1" fill="#0a7c84"/><rect x="924" y="599.5" width="1" height="3" fill="#0a7e86"/><rect x="926" y="354.8" width="1" height="2" fill="#0a7c84"/><rect x="926" y="599.5" width="1" height="5" fill="#0a7e86"/><rect x="928" y="355.8" width="1" height="1" fill="#0a7c84"/><rect x="931" y="599.5" width="1" height="3" fill="#0a7e86"/><rect x="933" y="354.8" width="1" height="2" fill="#0a7c84"/><rect x="933" y="599.5" width="1" height="2" fill="#0a7e86"/><rect x="938" y="599.5" width="1" height="7" fill="#0a7e86"/><rect x="941" y="354.8" width="1" height="2" fill="#0a7c84"/><rect x="943" y="354.8" width="1" height="2" fill="#0a7c84"/><rect x="943" y="599.5" width="1" height="1" fill="#0a7e86"/><rect x="946" y="599.5" width="1" height="3" fill="#0a7e86"/><rect x="951" y="354.8" width="1" height="2" fill="#0a7c84"/><rect x="951" y="599.5" width="1" height="4" fill="#0a7e86"/><rect x="952" y="355.8" width="1" height="1" fill="#0a7c84"/><rect x="952" y="599.5" width="1" height="2" fill="#0a7e86"/><rect x="957" y="355.8" width="1" height="1" fill="#0a7c84"/><rect x="957" y="599.5" width="1" height="3" fill="#0a7e86"/><rect x="960" y="355.8" width="1" height="1" fill="#0a7c84"/><rect x="960" y="599.5" width="1" height="2" fill="#0a7e86"/><rect x="963" y="354.8" width="1" height="2" fill="#0a7c84"/><rect x="963" y="599.5" width="1" height="1" fill="#0a7e86"/><rect x="966" y="599.5" width="1" height="2" fill="#0a7e86"/><rect x="969" y="599.5" width="1" height="3" fill="#0a7e86"/><rect x="972" y="355.8" width="1" height="1" fill="#0a7c84"/><rect x="972" y="599.5" width="1" height="4" fill="#0a7e86"/><rect x="973" y="355.8" width="1" height="1" fill="#0a7c84"/><rect x="973" y="599.5" width="1" height="4" fill="#0a7e86"/><rect x="974" y="599.5" width="1" height="3" fill="#0a7e86"/><rect x="977" y="355.8" width="1" height="1" fill="#0a7c84"/><rect x="977" y="599.5" width="1" height="4" fill="#0a7e86"/><rect x="978" y="354.8" width="1" height="2" fill="#0a7c84"/><rect x="978" y="599.5" width="1" height="7" fill="#0a7e86"/><rect x="980" y="354.8" width="1" height="2" fill="#0a7c84"/><rect x="980" y="599.5" width="1" height="1" fill="#0a7e86"/><rect x="983" y="599.5" width="1" height="2" fill="#0a7e86"/><rect x="986" y="355.8" width="1" height="1" fill="#0a7c84"/><rect x="986" y="599.5" width="1" height="5" fill="#0a7e86"/><rect x="988" y="355.8" width="1" height="1" fill="#0a7c84"/><rect x="988" y="599.5" width="1" height="2" fill="#0a7e86"/><rect x="990" y="353.8" width="1" height="3" fill="#0a7c84"/><rect x="990" y="599.5" width="1" height="2" fill="#0a7e86"/><rect x="992" y="355.8" width="1" height="1" fill="#0a7c84"/><rect x="992" y="599.5" width="1" height="1" fill="#0a7e86"/><rect x="996" y="599.5" width="1" height="7" fill="#0a7e86"/><rect x="998" y="355.8" width="1" height="1" fill="#0a7c84"/><rect x="998" y="599.5" width="1" height="6" fill="#0a7e86"/><rect x="999" y="354.8" width="1" height="2" fill="#0a7c84"/><rect x="999" y="599.5" width="1" height="2" fill="#0a7e86"/><rect x="1001" y="599.5" width="1" height="7" fill="#0a7e86"/><rect x="1002" y="354.8" width="1" height="2" fill="#0a7c84"/><rect x="1002" y="599.5" width="1" height="3" fill="#0a7e86"/><rect x="1003" y="599.5" width="1" height="1" fill="#0a7e86"/><rect x="1006" y="354.8" width="1" height="2" fill="#0a7c84"/><rect x="1006" y="599.5" width="1" height="6" fill="#0a7e86"/><rect x="1008" y="354.8" width="1" height="2" fill="#0a7c84"/><rect x="1008" y="599.5" width="1" height="4" fill="#0a7e86"/><rect x="1009" y="355.8" width="1" height="1" fill="#0a7c84"/><rect x="1009" y="599.5" width="1" height="2" fill="#0a7e86"/><rect x="1017.3" y="356.8" width="21.2" height="242.7" fill="url(#teal)"/><rect x="1018" y="354.8" width="1" height="2" fill="#0a7c84"/><rect x="1018" y="599.5" width="1" height="3" fill="#0a7e86"/><rect x="1021" y="355.8" width="1" height="1" fill="#0a7c84"/><rect x="1021" y="599.5" width="1" height="2" fill="#0a7e86"/><rect x="1023" y="355.8" width="1" height="1" fill="#0a7c84"/><rect x="1023" y="599.5" width="1" height="7" fill="#0a7e86"/><rect x="1026" y="353.8" width="1" height="3" fill="#0a7c84"/><rect x="1026" y="599.5" width="1" height="3" fill="#0a7e86"/><rect x="1027" y="354.8" width="1" height="2" fill="#0a7c84"/><rect x="1027" y="599.5" width="1" height="4" fill="#0a7e86"/><rect x="1030" y="355.8" width="1" height="1" fill="#0a7c84"/><rect x="1030" y="599.5" width="1" height="5" fill="#0a7e86"/><rect x="1033" y="354.8" width="1" height="2" fill="#0a7c84"/><rect x="1033" y="599.5" width="1" height="5" fill="#0a7e86"/><rect x="1035" y="353.8" width="1" height="3" fill="#0a7c84"/><rect x="1035" y="599.5" width="1" height="2" fill="#0a7e86"/><rect x="671.9" y="344.7" width="6.8" height="32.3" fill="url(#g7)"/><rect x="676.2" y="340" width="1" height="5" fill="#0c96a0"/><path d="M673.1 588 L675.2 578 L677.3 588 L679.8 608 L670.6 608 Z" fill="#000"/><rect x="841.4" y="344.7" width="7.4" height="32.3" fill="url(#g8)"/><rect x="846.0" y="340" width="1" height="5" fill="#0c96a0"/><path d="M842.6 588 L845.0 578 L847.4 588 L849.9 608 L840.1 608 Z" fill="#000"/><rect x="1011.0" y="344.7" width="7.7" height="32.3" fill="url(#g9)"/><rect x="1015.8" y="340" width="1" height="5" fill="#0c96a0"/><path d="M1012.2 588 L1014.8 578 L1017.3 588 L1019.8 608 L1009.7 608 Z" fill="#000"/></g><rect x="23.0" y="4.5" width="1015.5" height="615.5" fill="none" stroke="#7c7c7c" stroke-width="1.6"/><path d="M9 161.8 L9 158 L23 158 L23 160.6 L10.6 160.6 L10.6 161.8 Z" fill="#e0e000"/><path d="M9 314.1 L9 310.3 L23 310.3 L23 312.90000000000003 L10.6 312.90000000000003 L10.6 314.1 Z" fill="#20d820"/><path d="M9 591.8 L9 588 L23 588 L23 590.6 L10.6 590.6 L10.6 591.8 Z" fill="#20c8d0"/><line x1="188" y1="66.6" x2="234" y2="66.6" stroke="#f0f0f0" stroke-width="1.5"/><line x1="212.7" y1="66.6" x2="248.4" y2="85.7" stroke="#f0f0f0" stroke-width="1.2"/><line x1="214" y1="190.9" x2="232.5" y2="190.9" stroke="#f0f0f0" stroke-width="1.5"/><line x1="227.1" y1="190.9" x2="248.4" y2="202.3" stroke="#f0f0f0" stroke-width="1.2"/><line x1="185" y1="334" x2="231.6" y2="334" stroke="#f0f0f0" stroke-width="1.5"/><line x1="209.9" y1="334" x2="248.8" y2="360.5" stroke="#f0f0f0" stroke-width="1.2"/><path d="M243 630.8 L252.5 630.8 L247.7 621.8 Z" fill="#e8e800"/><path d="M1038 66.3 L1049.7 61.6 L1049.7 71 Z" fill="#f0f000"/><g fill="#ffffff"><path d="M807 25 L828 25 L815 40 L793.5 40 Z"/><path d="M857 25 L836 25 L849 40 L870.5 40 Z"/><path d="M815.4 41.5 L830.8 27.5 L830.8 46.8 L815.4 60.6 Z"/><path d="M848.6 41.5 L833.2 27.5 L833.2 46.8 L848.6 60.6 Z"/></g><rect x="6.6" y="634.3" width="125.4" height="56.2" rx="4.5" fill="url(#pg)" stroke="#6a6b70" stroke-width="2"/><rect x="138.0" y="634.3" width="124.7" height="56.2" rx="4.5" fill="url(#pg3)" stroke="#22c4dc" stroke-width="2"/><rect x="138" y="660" width="124.7" height="30.5" rx="3" fill="url(#glow)"/><rect x="269.7" y="634.3" width="125.0" height="56.2" rx="4.5" fill="url(#pg)" stroke="#6a6b70" stroke-width="2"/><rect x="768.0" y="634.6" width="144.6" height="56.2" rx="4.5" fill="url(#pg)" stroke="#6a6b70" stroke-width="2"/><rect x="919.8" y="634.6" width="124.7" height="55.9" rx="4.5" fill="url(#pg)" stroke="#6a6b70" stroke-width="2"/><rect x="7.7" y="636.3" width="24.3" height="16" rx="2.5" fill="#f4f400"/><rect x="53" y="637.6" width="30.6" height="12.7" rx="3" fill="#000"/><rect x="85.8" y="637.6" width="43" height="12.7" rx="3" fill="#000"/><rect x="141" y="637.3" width="24" height="16.3" rx="2.5" fill="#14e4f4"/><rect x="218.5" y="638.6" width="43" height="13.4" rx="3" fill="#000"/><rect x="271" y="636" width="24" height="16" rx="2.5" fill="#22e022"/><rect x="348.5" y="637.6" width="43.3" height="13" rx="3" fill="#000"/><path d="M769.1 652.3 L769.1 639 Q769.1 636 772 636 L909 636 Q911.8 636 911.8 639 L911.8 652.3 Z" fill="url(#hd)"/><path d="M920.8 652.3 L920.8 639 Q920.8 636 923.7 636 L1040.5 636 Q1043.3 636 1043.3 639 L1043.3 652.3 Z" fill="url(#hd)"/><rect x="992.7" y="637.3" width="22.3" height="13.6" rx="3" fill="#000"/><rect x="1016.8" y="637.3" width="25.9" height="13.6" rx="3" fill="#000"/><clipPath id="c3clip"><rect x="139" y="635" width="124.2" height="55"/></clipPath><text transform="translate(9.02,648.80) scale(0.8842,1)" font-family="Liberation Sans" font-size="16" font-weight="normal" fill="#000">C1</text><text transform="translate(54.96,649.20) scale(0.9370,1)" font-family="Liberation Sans" font-size="14.5" font-weight="normal" fill="#e8e800">BwL</text><text transform="translate(87.54,649.20) scale(0.9564,1)" font-family="Liberation Sans" font-size="14.5" font-weight="normal" fill="#e8e800">DC1M</text><text transform="translate(62.08,669.00) scale(0.9219,1)" font-family="Liberation Sans" font-size="16.5" font-weight="normal" fill="#e6e6e6">1.00 V/div</text><text transform="translate(45.84,686.60) scale(0.9598,1)" font-family="Liberation Sans" font-size="16.5" font-weight="normal" fill="#e6e6e6">1.970 V ofst</text><text transform="translate(141.55,649.40) scale(1.0526,1)" font-family="Liberation Sans" font-size="16" font-weight="normal" fill="#000">C3</text><text transform="translate(220.86,649.40) scale(0.9385,1)" font-family="Liberation Sans" font-size="14.5" font-weight="normal" fill="#22c8e0">DC1M</text><g clip-path="url(#c3clip)"><text transform="translate(184.03,670.00) scale(0.9695,1)" font-family="Liberation Sans" font-size="16.5" font-weight="normal" fill="#e6e6e6">500 mV/div</text></g><g clip-path="url(#c3clip)"><text transform="translate(173.04,688.00) scale(0.9602,1)" font-family="Liberation Sans" font-size="16.5" font-weight="normal" fill="#e6e6e6">-1.800 V ofst</text></g><text transform="translate(271.58,649.00) scale(1.0211,1)" font-family="Liberation Sans" font-size="16" font-weight="normal" fill="#000">C4</text><text transform="translate(350.86,649.20) scale(0.9385,1)" font-family="Liberation Sans" font-size="14.5" font-weight="normal" fill="#22d822">DC1M</text><text transform="translate(324.98,669.00) scale(0.9205,1)" font-family="Liberation Sans" font-size="16.5" font-weight="normal" fill="#e6e6e6">1.00 V/div</text><text transform="translate(313.90,686.80) scale(0.9542,1)" font-family="Liberation Sans" font-size="16.5" font-weight="normal" fill="#e6e6e6">0 mV offset</text><text transform="translate(772.70,648.60) scale(0.9289,1)" font-family="Liberation Sans" font-size="16.5" font-weight="normal" fill="#000">Tbase</text><text transform="translate(848.01,648.60) scale(0.9889,1)" font-family="Liberation Sans" font-size="16.5" font-weight="normal" fill="#000">-55.6 ms</text><text transform="translate(831.24,669.00) scale(0.9614,1)" font-family="Liberation Sans" font-size="16.5" font-weight="normal" fill="#e6e6e6">20.0 ms/div</text><text transform="translate(770.46,686.80) scale(0.9383,1)" font-family="Liberation Sans" font-size="16.5" font-weight="normal" fill="#e6e6e6">10.0 MS</text><text transform="translate(853.35,686.80) scale(0.9542,1)" font-family="Liberation Sans" font-size="16.5" font-weight="normal" fill="#e6e6e6">50 MS/s</text><text transform="translate(923.50,648.20) scale(0.9481,1)" font-family="Liberation Sans" font-size="16.5" font-weight="normal" fill="#000">Trigger</text><text transform="translate(995.55,648.80) scale(0.8529,1)" font-family="Liberation Sans" font-size="14.5" font-weight="normal" fill="#f0f0f0">C1</text><text transform="translate(1019.04,648.80) scale(0.9579,1)" font-family="Liberation Sans" font-size="14.5" font-weight="normal" fill="#f0f0f0">DC</text><text transform="translate(921.86,668.80) scale(0.9424,1)" font-family="Liberation Sans" font-size="16.5" font-weight="normal" fill="#e6e6e6">Stop</text><text transform="translate(998.17,668.80) scale(0.9277,1)" font-family="Liberation Sans" font-size="16.5" font-weight="normal" fill="#e6e6e6">1.21 V</text><text transform="translate(921.83,685.80) scale(0.9676,1)" font-family="Liberation Sans" font-size="16.5" font-weight="normal" fill="#e6e6e6">Edge</text><text transform="translate(980.85,685.80) scale(0.9516,1)" font-family="Liberation Sans" font-size="16.5" font-weight="normal" fill="#e6e6e6">Negative</text><text transform="translate(187.70,63.50) scale(1.0279,1)" font-family="Liberation Sans" font-size="14.5" font-weight="normal" fill="#e8e8e8">snr-i2c</text><text transform="translate(214.20,187.80) scale(0.8889,1)" font-family="Liberation Sans" font-size="14.5" font-weight="normal" fill="#e8e8e8">clk</text><text transform="translate(184.25,331.20) scale(0.9522,1)" font-family="Liberation Sans" font-size="14.5" font-weight="normal" fill="#e8e8e8">mipi-d0</text><text transform="translate(6.00,154.70) scale(0.8125,1)" font-family="Liberation Sans" font-size="12.5" font-weight="normal" fill="#e0e000">C1</text><text transform="translate(5.90,306.80) scale(0.9313,1)" font-family="Liberation Sans" font-size="12.5" font-weight="normal" fill="#20d820">C4</text><text transform="translate(6.00,584.20) scale(0.8750,1)" font-family="Liberation Sans" font-size="12.5" font-weight="normal" fill="#20c8d0">C3</text><text transform="translate(876.50,39.00) scale(0.8519,1)" font-family="Liberation Sans" font-size="19.5" font-weight="bold" fill="#ffffff">TELEDYNE</text><text transform="translate(971.65,39.00) scale(0.7468,1)" font-family="Liberation Sans" font-size="19.5" font-weight="normal" fill="#f0f0f0">LECROY</text><text transform="translate(877.58,55.40) scale(0.9187,1)" font-family="Liberation Sans" font-size="17.5" font-weight="normal" fill="#d6d6d6">Everywhere</text><text transform="translate(963.30,55.40) scale(1.0100,1)" font-family="Liberation Sans" font-size="17.5" font-weight="bold" fill="#ffffff">you</text><text transform="translate(994.74,55.40) scale(0.9613,1)" font-family="Liberation Sans" font-size="17.5" font-weight="normal" fill="#d0d0d0">look</text><text transform="translate(1024.00,46.50) scale(0.6222,1)" font-family="Liberation Sans" font-size="6" font-weight="normal" fill="#d0d0d0">TM</text><g id="logotext"></g></svg>
</body></html>
